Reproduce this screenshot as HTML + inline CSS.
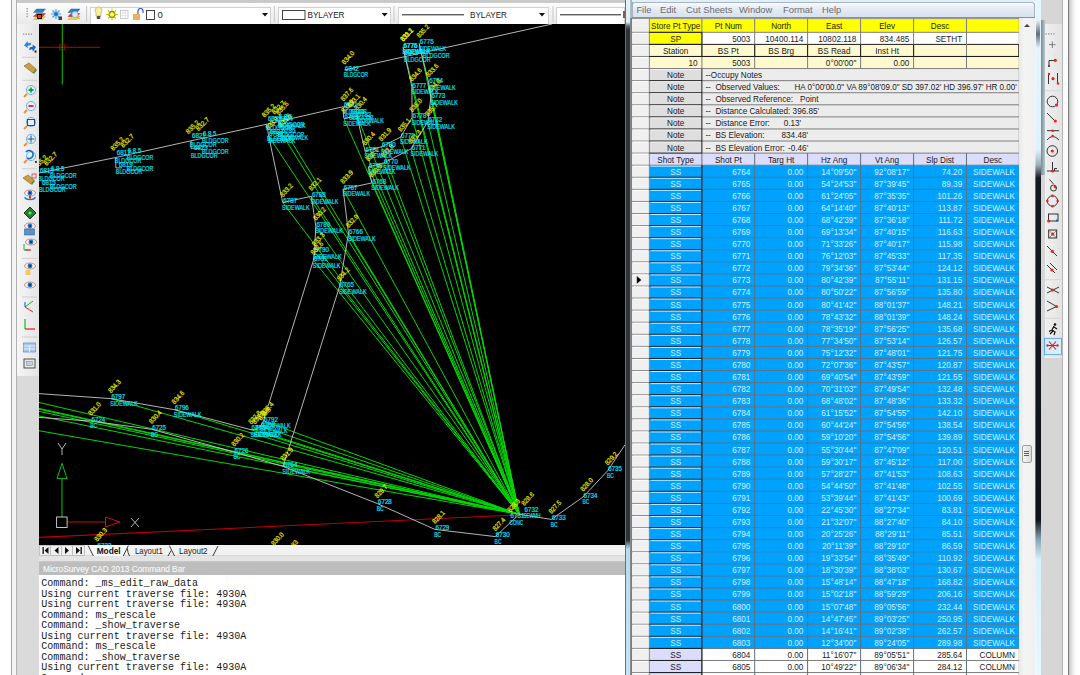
<!DOCTYPE html><html><head><meta charset="utf-8"><style>
*{margin:0;padding:0;box-sizing:border-box}
html,body{width:1080px;height:675px;overflow:hidden;background:#fff;position:relative;font-family:"Liberation Sans",sans-serif}
.ab{position:absolute}
.c{position:absolute;overflow:hidden;white-space:nowrap;font-size:8.6px;line-height:12px;color:#1a1a1a}
.r{text-align:right;padding-right:3px}
.m{text-align:center}
.l{text-align:left;padding-left:3px}
.cmd{font-family:"Liberation Mono",monospace;font-size:10.05px;line-height:10.52px;color:#1a1a1a;white-space:pre}
</style></head><body>
<div class="ab" style="left:11px;top:0px;width:1px;height:675px;background:#a4a4a4"></div>
<div class="ab" style="left:12px;top:0px;width:5px;height:675px;background:#f4f4f4"></div>
<div class="ab" style="left:16px;top:0px;width:1px;height:675px;background:#b0b0b0"></div>
<div class="ab" style="left:17px;top:0px;width:608px;height:3px;background:#c9c9c9"></div>
<div class="ab" style="left:17px;top:3px;width:608px;height:21px;background:linear-gradient(#fdfdfd,#e9e9e9)"></div>
<div class="ab" style="left:17px;top:24px;width:22px;height:521px;background:#dadada"></div>
<div class="ab" style="left:17px;top:545px;width:22px;height:130px;background:#dadada"></div>
<div class="ab" style="left:39px;top:575px;width:1px;height:100px;background:#a8a8a8"></div>
<div class="ab" style="left:90px;top:7px;width:181px;height:17px;background:#fff;border:1px solid #d0d0d0;border-bottom:none"></div>
<div class="ab" style="left:278px;top:7px;width:113px;height:17px;background:#fff;border:1px solid #d0d0d0;border-bottom:none"></div>
<div class="ab" style="left:398px;top:7px;width:151px;height:17px;background:#fff;border:1px solid #d0d0d0;border-bottom:none"></div>
<div class="ab" style="left:556px;top:7px;width:69px;height:17px;background:#fff;border:1px solid #d0d0d0;border-bottom:none"></div>
<svg class="ab" style="left:39px;top:24px" width="586" height="521" viewBox="39 24 586 521">
<rect x="39" y="24" width="586" height="521" fill="#000"/>
<line x1="519.3" y1="514.3" x2="283.1" y2="466.4" stroke="#00d800" stroke-width="1"/>
<line x1="519.3" y1="514.3" x2="339.5" y2="286.5" stroke="#00d800" stroke-width="1"/>
<line x1="519.3" y1="514.3" x2="348.5" y2="233.3" stroke="#00d800" stroke-width="1"/>
<line x1="519.3" y1="514.3" x2="343.1" y2="189.2" stroke="#00d800" stroke-width="1"/>
<line x1="519.3" y1="514.3" x2="371.8" y2="182.9" stroke="#00d800" stroke-width="1"/>
<line x1="519.3" y1="514.3" x2="368.4" y2="166.9" stroke="#00d800" stroke-width="1"/>
<line x1="519.3" y1="514.3" x2="383.5" y2="163.0" stroke="#00d800" stroke-width="1"/>
<line x1="519.3" y1="514.3" x2="411.1" y2="148.9" stroke="#00d800" stroke-width="1"/>
<line x1="519.3" y1="514.3" x2="427.8" y2="121.7" stroke="#00d800" stroke-width="1"/>
<line x1="519.3" y1="514.3" x2="430.8" y2="97.6" stroke="#00d800" stroke-width="1"/>
<line x1="519.3" y1="514.3" x2="428.6" y2="82.6" stroke="#00d800" stroke-width="1"/>
<line x1="519.3" y1="514.3" x2="419.2" y2="43.4" stroke="#00d800" stroke-width="1"/>
<line x1="519.3" y1="514.3" x2="403.0" y2="47.1" stroke="#00d800" stroke-width="1"/>
<line x1="519.3" y1="514.3" x2="411.9" y2="86.9" stroke="#00d800" stroke-width="1"/>
<line x1="519.3" y1="514.3" x2="412.1" y2="117.5" stroke="#00d800" stroke-width="1"/>
<line x1="519.3" y1="514.3" x2="400.5" y2="137.2" stroke="#00d800" stroke-width="1"/>
<line x1="519.3" y1="514.3" x2="381.4" y2="146.8" stroke="#00d800" stroke-width="1"/>
<line x1="519.3" y1="514.3" x2="365.0" y2="151.0" stroke="#00d800" stroke-width="1"/>
<line x1="519.3" y1="514.3" x2="356.9" y2="115.9" stroke="#00d800" stroke-width="1"/>
<line x1="519.3" y1="514.3" x2="343.9" y2="118.5" stroke="#00d800" stroke-width="1"/>
<line x1="519.3" y1="514.3" x2="278.6" y2="120.5" stroke="#00d800" stroke-width="1"/>
<line x1="519.3" y1="514.3" x2="281.1" y2="132.5" stroke="#00d800" stroke-width="1"/>
<line x1="519.3" y1="514.3" x2="268.3" y2="135.6" stroke="#00d800" stroke-width="1"/>
<line x1="519.3" y1="514.3" x2="282.7" y2="202.5" stroke="#00d800" stroke-width="1"/>
<line x1="519.3" y1="514.3" x2="311.3" y2="196.3" stroke="#00d800" stroke-width="1"/>
<line x1="519.3" y1="514.3" x2="315.8" y2="226.1" stroke="#00d800" stroke-width="1"/>
<line x1="519.3" y1="514.3" x2="314.5" y2="251.7" stroke="#00d800" stroke-width="1"/>
<line x1="519.3" y1="514.3" x2="313.4" y2="260.3" stroke="#00d800" stroke-width="1"/>
<line x1="519.3" y1="514.3" x2="263.5" y2="420.9" stroke="#00d800" stroke-width="1"/>
<line x1="519.3" y1="514.3" x2="260.7" y2="426.1" stroke="#00d800" stroke-width="1"/>
<line x1="519.3" y1="514.3" x2="254.7" y2="429.7" stroke="#00d800" stroke-width="1"/>
<line x1="519.3" y1="514.3" x2="251.0" y2="429.7" stroke="#00d800" stroke-width="1"/>
<line x1="519.3" y1="514.3" x2="174.4" y2="409.7" stroke="#00d800" stroke-width="1"/>
<line x1="519.3" y1="514.3" x2="110.8" y2="398.6" stroke="#00d800" stroke-width="1"/>
<line x1="519.3" y1="514.3" x2="-15.0" y2="389.9" stroke="#00d800" stroke-width="1"/>
<line x1="519.3" y1="514.3" x2="-135.1" y2="371.1" stroke="#00d800" stroke-width="1"/>
<line x1="519.3" y1="514.3" x2="-218.3" y2="351.7" stroke="#00d800" stroke-width="1"/>
<line x1="519.3" y1="514.3" x2="-278.1" y2="343.4" stroke="#00d800" stroke-width="1"/>
<line x1="519.3" y1="514.3" x2="-316.6" y2="343.1" stroke="#00d800" stroke-width="1"/>
<line x1="519.3" y1="514.3" x2="-409.1" y2="352.8" stroke="#00d800" stroke-width="1"/>
<line x1="519.3" y1="514.8" x2="39" y2="537.4" stroke="#c00000" stroke-width="1.1"/>
<polyline points="39.0,173.0 115.8,157.5 191.0,140.8 266.9,124.2 343.3,106.7 343.5,117.8" fill="none" stroke="#c8c8c8" stroke-width="0.9"/>
<polyline points="115.8,157.5 115.8,167.9 122.0,167.9" fill="none" stroke="#c8c8c8" stroke-width="0.9"/>
<polyline points="191.0,140.8 191.0,148.3 200.0,148.3" fill="none" stroke="#c8c8c8" stroke-width="0.9"/>
<polyline points="266.9,124.2 268.3,134.2" fill="none" stroke="#c8c8c8" stroke-width="0.9"/>
<polyline points="344.4,70.0 480.0,40.0 552.0,24.0" fill="none" stroke="#c8c8c8" stroke-width="0.9"/>
<polyline points="283.1,466.4 339.5,286.5 348.5,233.3 343.1,189.2 371.8,182.9 368.4,166.9 383.5,163.0 411.1,148.9 427.8,121.7 430.8,97.6 428.6,82.6 419.2,43.4" fill="none" stroke="#c8c8c8" stroke-width="0.9"/>
<polyline points="403.0,47.1 411.9,86.9 412.1,117.5 400.5,137.2 381.4,146.8 365.0,151.0 356.9,115.9 343.9,118.5" fill="none" stroke="#c8c8c8" stroke-width="0.9"/>
<polyline points="268.3,134.2 282.7,202.5 311.3,196.3 315.8,226.1 314.5,251.7 313.4,260.3 263.5,420.9 260.7,426.1 254.7,429.7 251.0,429.7 174.4,409.7 110.8,398.6 -15.0,389.9" fill="none" stroke="#c8c8c8" stroke-width="0.9"/>
<polyline points="39.0,417.4 90.9,421.1 151.6,429.3 234.0,452.0 283.1,466.4 377.4,503.6 434.9,529.4 495.2,536.6 519.3,514.3 551.3,519.4 583.0,497.0 607.6,470.8 625.0,444.7" fill="none" stroke="#c8c8c8" stroke-width="0.9"/>
<line x1="39" y1="47.3" x2="100" y2="47.3" stroke="#c00000" stroke-width="1"/>
<line x1="62.3" y1="24" x2="62.3" y2="84.5" stroke="#10c010" stroke-width="1"/>
<rect x="59.8" y="44.8" width="5" height="5" fill="none" stroke="#c00000" stroke-width="0.9"/>
<line x1="62" y1="517" x2="62" y2="478.6" stroke="#10c010" stroke-width="1"/>
<polygon points="57,478.6 62,463.3 67,478.6" fill="none" stroke="#10c010" stroke-width="1"/>
<line x1="67" y1="522" x2="105.5" y2="522" stroke="#c01010" stroke-width="1"/>
<polygon points="105.5,517 120,522 105.5,527" fill="none" stroke="#d01010" stroke-width="1"/>
<rect x="56.6" y="517" width="10.5" height="10.5" fill="none" stroke="#d8d8d8" stroke-width="0.9"/>
<path d="M58,443 L62,449 L66,443 M62,449 L62,455" stroke="#c8c8c8" stroke-width="0.9" fill="none"/>
<path d="M131,518 L139,527 M139,518 L131,527" stroke="#c8c8c8" stroke-width="0.9" fill="none"/>
<text x="283.7" y="467.0" fill="#00e8ff" stroke="#00e8ff" stroke-width="0.18" font-size="6.8" textLength="13.8" lengthAdjust="spacingAndGlyphs">6764</text>
<text x="282.5" y="473.6" fill="#00e8ff" stroke="#00e8ff" stroke-width="0.18" font-size="6.8" textLength="27.6" lengthAdjust="spacingAndGlyphs">SIDEWALK</text>
<text x="0" y="0" transform="translate(283.3,461.1) rotate(-47)" fill="#f0f000" stroke="#f0f000" stroke-width="0.18" font-size="6.8" textLength="15.1" lengthAdjust="spacingAndGlyphs">831.9</text>
<text x="340.1" y="287.1" fill="#00e8ff" stroke="#00e8ff" stroke-width="0.18" font-size="6.8" textLength="13.8" lengthAdjust="spacingAndGlyphs">6765</text>
<text x="338.9" y="293.7" fill="#00e8ff" stroke="#00e8ff" stroke-width="0.18" font-size="6.8" textLength="27.6" lengthAdjust="spacingAndGlyphs">SIDEWALK</text>
<text x="0" y="0" transform="translate(339.7,281.2) rotate(-47)" fill="#f0f000" stroke="#f0f000" stroke-width="0.18" font-size="6.8" textLength="15.1" lengthAdjust="spacingAndGlyphs">834.2</text>
<text x="349.1" y="233.9" fill="#00e8ff" stroke="#00e8ff" stroke-width="0.18" font-size="6.8" textLength="13.8" lengthAdjust="spacingAndGlyphs">6766</text>
<text x="347.9" y="240.5" fill="#00e8ff" stroke="#00e8ff" stroke-width="0.18" font-size="6.8" textLength="27.6" lengthAdjust="spacingAndGlyphs">SIDEWALK</text>
<text x="0" y="0" transform="translate(348.7,228.0) rotate(-47)" fill="#f0f000" stroke="#f0f000" stroke-width="0.18" font-size="6.8" textLength="15.1" lengthAdjust="spacingAndGlyphs">832.9</text>
<text x="343.7" y="189.8" fill="#00e8ff" stroke="#00e8ff" stroke-width="0.18" font-size="6.8" textLength="13.8" lengthAdjust="spacingAndGlyphs">6767</text>
<text x="342.5" y="196.4" fill="#00e8ff" stroke="#00e8ff" stroke-width="0.18" font-size="6.8" textLength="27.6" lengthAdjust="spacingAndGlyphs">SIDEWALK</text>
<text x="0" y="0" transform="translate(343.3,183.9) rotate(-47)" fill="#f0f000" stroke="#f0f000" stroke-width="0.18" font-size="6.8" textLength="15.1" lengthAdjust="spacingAndGlyphs">833.9</text>
<text x="372.4" y="183.5" fill="#00e8ff" stroke="#00e8ff" stroke-width="0.18" font-size="6.8" textLength="13.8" lengthAdjust="spacingAndGlyphs">6768</text>
<text x="371.2" y="190.1" fill="#00e8ff" stroke="#00e8ff" stroke-width="0.18" font-size="6.8" textLength="27.6" lengthAdjust="spacingAndGlyphs">SIDEWALK</text>
<text x="0" y="0" transform="translate(372.0,177.6) rotate(-47)" fill="#f0f000" stroke="#f0f000" stroke-width="0.18" font-size="6.8" textLength="15.1" lengthAdjust="spacingAndGlyphs">830.9</text>
<text x="369.0" y="167.5" fill="#00e8ff" stroke="#00e8ff" stroke-width="0.18" font-size="6.8" textLength="13.8" lengthAdjust="spacingAndGlyphs">6769</text>
<text x="367.8" y="174.1" fill="#00e8ff" stroke="#00e8ff" stroke-width="0.18" font-size="6.8" textLength="27.6" lengthAdjust="spacingAndGlyphs">SIDEWALK</text>
<text x="0" y="0" transform="translate(368.6,161.6) rotate(-47)" fill="#f0f000" stroke="#f0f000" stroke-width="0.18" font-size="6.8" textLength="15.1" lengthAdjust="spacingAndGlyphs">830.7</text>
<text x="384.1" y="163.6" fill="#00e8ff" stroke="#00e8ff" stroke-width="0.18" font-size="6.8" textLength="13.8" lengthAdjust="spacingAndGlyphs">6770</text>
<text x="382.9" y="170.2" fill="#00e8ff" stroke="#00e8ff" stroke-width="0.18" font-size="6.8" textLength="27.6" lengthAdjust="spacingAndGlyphs">SIDEWALK</text>
<text x="0" y="0" transform="translate(383.7,157.7) rotate(-47)" fill="#f0f000" stroke="#f0f000" stroke-width="0.18" font-size="6.8" textLength="15.1" lengthAdjust="spacingAndGlyphs">832.8</text>
<text x="411.7" y="149.5" fill="#00e8ff" stroke="#00e8ff" stroke-width="0.18" font-size="6.8" textLength="13.8" lengthAdjust="spacingAndGlyphs">6771</text>
<text x="410.5" y="156.1" fill="#00e8ff" stroke="#00e8ff" stroke-width="0.18" font-size="6.8" textLength="27.6" lengthAdjust="spacingAndGlyphs">SIDEWALK</text>
<text x="0" y="0" transform="translate(411.3,143.6) rotate(-47)" fill="#f0f000" stroke="#f0f000" stroke-width="0.18" font-size="6.8" textLength="15.1" lengthAdjust="spacingAndGlyphs">831.3</text>
<text x="428.4" y="122.3" fill="#00e8ff" stroke="#00e8ff" stroke-width="0.18" font-size="6.8" textLength="13.8" lengthAdjust="spacingAndGlyphs">6772</text>
<text x="427.2" y="128.9" fill="#00e8ff" stroke="#00e8ff" stroke-width="0.18" font-size="6.8" textLength="27.6" lengthAdjust="spacingAndGlyphs">SIDEWALK</text>
<text x="0" y="0" transform="translate(428.0,116.4) rotate(-47)" fill="#f0f000" stroke="#f0f000" stroke-width="0.18" font-size="6.8" textLength="15.1" lengthAdjust="spacingAndGlyphs">835.7</text>
<text x="431.4" y="98.2" fill="#00e8ff" stroke="#00e8ff" stroke-width="0.18" font-size="6.8" textLength="13.8" lengthAdjust="spacingAndGlyphs">6773</text>
<text x="430.2" y="104.8" fill="#00e8ff" stroke="#00e8ff" stroke-width="0.18" font-size="6.8" textLength="27.6" lengthAdjust="spacingAndGlyphs">SIDEWALK</text>
<text x="0" y="0" transform="translate(431.0,92.3) rotate(-47)" fill="#f0f000" stroke="#f0f000" stroke-width="0.18" font-size="6.8" textLength="15.1" lengthAdjust="spacingAndGlyphs">834.8</text>
<text x="429.2" y="83.2" fill="#00e8ff" stroke="#00e8ff" stroke-width="0.18" font-size="6.8" textLength="13.8" lengthAdjust="spacingAndGlyphs">6774</text>
<text x="428.0" y="89.8" fill="#00e8ff" stroke="#00e8ff" stroke-width="0.18" font-size="6.8" textLength="27.6" lengthAdjust="spacingAndGlyphs">SIDEWALK</text>
<text x="0" y="0" transform="translate(428.8,77.3) rotate(-47)" fill="#f0f000" stroke="#f0f000" stroke-width="0.18" font-size="6.8" textLength="15.1" lengthAdjust="spacingAndGlyphs">833.6</text>
<text x="419.8" y="44.0" fill="#00e8ff" stroke="#00e8ff" stroke-width="0.18" font-size="6.8" textLength="13.8" lengthAdjust="spacingAndGlyphs">6775</text>
<text x="418.6" y="50.6" fill="#00e8ff" stroke="#00e8ff" stroke-width="0.18" font-size="6.8" textLength="27.6" lengthAdjust="spacingAndGlyphs">SIDEWALK</text>
<text x="0" y="0" transform="translate(419.4,38.1) rotate(-47)" fill="#f0f000" stroke="#f0f000" stroke-width="0.18" font-size="6.8" textLength="15.1" lengthAdjust="spacingAndGlyphs">835.2</text>
<text x="403.6" y="47.7" fill="#00e8ff" stroke="#00e8ff" stroke-width="0.18" font-size="6.8" textLength="13.8" lengthAdjust="spacingAndGlyphs">6776</text>
<text x="402.4" y="54.3" fill="#00e8ff" stroke="#00e8ff" stroke-width="0.18" font-size="6.8" textLength="27.6" lengthAdjust="spacingAndGlyphs">SIDEWALK</text>
<text x="0" y="0" transform="translate(403.2,41.8) rotate(-47)" fill="#f0f000" stroke="#f0f000" stroke-width="0.18" font-size="6.8" textLength="15.1" lengthAdjust="spacingAndGlyphs">831.2</text>
<text x="412.5" y="87.5" fill="#00e8ff" stroke="#00e8ff" stroke-width="0.18" font-size="6.8" textLength="13.8" lengthAdjust="spacingAndGlyphs">6777</text>
<text x="411.3" y="94.1" fill="#00e8ff" stroke="#00e8ff" stroke-width="0.18" font-size="6.8" textLength="27.6" lengthAdjust="spacingAndGlyphs">SIDEWALK</text>
<text x="0" y="0" transform="translate(412.1,81.6) rotate(-47)" fill="#f0f000" stroke="#f0f000" stroke-width="0.18" font-size="6.8" textLength="15.1" lengthAdjust="spacingAndGlyphs">834.6</text>
<text x="412.7" y="118.1" fill="#00e8ff" stroke="#00e8ff" stroke-width="0.18" font-size="6.8" textLength="13.8" lengthAdjust="spacingAndGlyphs">6778</text>
<text x="411.5" y="124.7" fill="#00e8ff" stroke="#00e8ff" stroke-width="0.18" font-size="6.8" textLength="27.6" lengthAdjust="spacingAndGlyphs">SIDEWALK</text>
<text x="0" y="0" transform="translate(412.3,112.2) rotate(-47)" fill="#f0f000" stroke="#f0f000" stroke-width="0.18" font-size="6.8" textLength="15.1" lengthAdjust="spacingAndGlyphs">835.0</text>
<text x="401.1" y="137.8" fill="#00e8ff" stroke="#00e8ff" stroke-width="0.18" font-size="6.8" textLength="13.8" lengthAdjust="spacingAndGlyphs">6779</text>
<text x="399.9" y="144.4" fill="#00e8ff" stroke="#00e8ff" stroke-width="0.18" font-size="6.8" textLength="27.6" lengthAdjust="spacingAndGlyphs">SIDEWALK</text>
<text x="0" y="0" transform="translate(400.7,131.9) rotate(-47)" fill="#f0f000" stroke="#f0f000" stroke-width="0.18" font-size="6.8" textLength="15.1" lengthAdjust="spacingAndGlyphs">835.1</text>
<text x="382.0" y="147.4" fill="#00e8ff" stroke="#00e8ff" stroke-width="0.18" font-size="6.8" textLength="13.8" lengthAdjust="spacingAndGlyphs">6780</text>
<text x="380.8" y="154.0" fill="#00e8ff" stroke="#00e8ff" stroke-width="0.18" font-size="6.8" textLength="27.6" lengthAdjust="spacingAndGlyphs">SIDEWALK</text>
<text x="0" y="0" transform="translate(381.6,141.5) rotate(-47)" fill="#f0f000" stroke="#f0f000" stroke-width="0.18" font-size="6.8" textLength="15.1" lengthAdjust="spacingAndGlyphs">831.9</text>
<text x="365.6" y="151.6" fill="#00e8ff" stroke="#00e8ff" stroke-width="0.18" font-size="6.8" textLength="13.8" lengthAdjust="spacingAndGlyphs">6781</text>
<text x="364.4" y="158.2" fill="#00e8ff" stroke="#00e8ff" stroke-width="0.18" font-size="6.8" textLength="27.6" lengthAdjust="spacingAndGlyphs">SIDEWALK</text>
<text x="0" y="0" transform="translate(365.2,145.7) rotate(-47)" fill="#f0f000" stroke="#f0f000" stroke-width="0.18" font-size="6.8" textLength="15.1" lengthAdjust="spacingAndGlyphs">830.4</text>
<text x="357.5" y="116.5" fill="#00e8ff" stroke="#00e8ff" stroke-width="0.18" font-size="6.8" textLength="13.8" lengthAdjust="spacingAndGlyphs">6782</text>
<text x="356.3" y="123.1" fill="#00e8ff" stroke="#00e8ff" stroke-width="0.18" font-size="6.8" textLength="27.6" lengthAdjust="spacingAndGlyphs">SIDEWALK</text>
<text x="0" y="0" transform="translate(357.1,110.6) rotate(-47)" fill="#f0f000" stroke="#f0f000" stroke-width="0.18" font-size="6.8" textLength="15.1" lengthAdjust="spacingAndGlyphs">830.4</text>
<text x="344.5" y="119.1" fill="#00e8ff" stroke="#00e8ff" stroke-width="0.18" font-size="6.8" textLength="13.8" lengthAdjust="spacingAndGlyphs">6783</text>
<text x="343.3" y="125.7" fill="#00e8ff" stroke="#00e8ff" stroke-width="0.18" font-size="6.8" textLength="27.6" lengthAdjust="spacingAndGlyphs">SIDEWALK</text>
<text x="0" y="0" transform="translate(344.1,113.2) rotate(-47)" fill="#f0f000" stroke="#f0f000" stroke-width="0.18" font-size="6.8" textLength="15.1" lengthAdjust="spacingAndGlyphs">833.9</text>
<text x="279.2" y="121.1" fill="#00e8ff" stroke="#00e8ff" stroke-width="0.18" font-size="6.8" textLength="13.8" lengthAdjust="spacingAndGlyphs">6784</text>
<text x="278.0" y="127.7" fill="#00e8ff" stroke="#00e8ff" stroke-width="0.18" font-size="6.8" textLength="27.6" lengthAdjust="spacingAndGlyphs">SIDEWALK</text>
<text x="0" y="0" transform="translate(278.8,115.2) rotate(-47)" fill="#f0f000" stroke="#f0f000" stroke-width="0.18" font-size="6.8" textLength="15.1" lengthAdjust="spacingAndGlyphs">835.6</text>
<text x="281.7" y="133.1" fill="#00e8ff" stroke="#00e8ff" stroke-width="0.18" font-size="6.8" textLength="13.8" lengthAdjust="spacingAndGlyphs">6785</text>
<text x="280.5" y="139.7" fill="#00e8ff" stroke="#00e8ff" stroke-width="0.18" font-size="6.8" textLength="27.6" lengthAdjust="spacingAndGlyphs">SIDEWALK</text>
<text x="0" y="0" transform="translate(281.3,127.2) rotate(-47)" fill="#f0f000" stroke="#f0f000" stroke-width="0.18" font-size="6.8" textLength="15.1" lengthAdjust="spacingAndGlyphs">835.6</text>
<text x="268.9" y="136.2" fill="#00e8ff" stroke="#00e8ff" stroke-width="0.18" font-size="6.8" textLength="13.8" lengthAdjust="spacingAndGlyphs">6786</text>
<text x="267.7" y="142.8" fill="#00e8ff" stroke="#00e8ff" stroke-width="0.18" font-size="6.8" textLength="27.6" lengthAdjust="spacingAndGlyphs">SIDEWALK</text>
<text x="0" y="0" transform="translate(268.5,130.3) rotate(-47)" fill="#f0f000" stroke="#f0f000" stroke-width="0.18" font-size="6.8" textLength="15.1" lengthAdjust="spacingAndGlyphs">833.9</text>
<text x="283.3" y="203.1" fill="#00e8ff" stroke="#00e8ff" stroke-width="0.18" font-size="6.8" textLength="13.8" lengthAdjust="spacingAndGlyphs">6787</text>
<text x="282.1" y="209.7" fill="#00e8ff" stroke="#00e8ff" stroke-width="0.18" font-size="6.8" textLength="27.6" lengthAdjust="spacingAndGlyphs">SIDEWALK</text>
<text x="0" y="0" transform="translate(282.9,197.2) rotate(-47)" fill="#f0f000" stroke="#f0f000" stroke-width="0.18" font-size="6.8" textLength="15.1" lengthAdjust="spacingAndGlyphs">833.2</text>
<text x="311.9" y="196.9" fill="#00e8ff" stroke="#00e8ff" stroke-width="0.18" font-size="6.8" textLength="13.8" lengthAdjust="spacingAndGlyphs">6788</text>
<text x="310.7" y="203.5" fill="#00e8ff" stroke="#00e8ff" stroke-width="0.18" font-size="6.8" textLength="27.6" lengthAdjust="spacingAndGlyphs">SIDEWALK</text>
<text x="0" y="0" transform="translate(311.5,191.0) rotate(-47)" fill="#f0f000" stroke="#f0f000" stroke-width="0.18" font-size="6.8" textLength="15.1" lengthAdjust="spacingAndGlyphs">832.1</text>
<text x="316.4" y="226.7" fill="#00e8ff" stroke="#00e8ff" stroke-width="0.18" font-size="6.8" textLength="13.8" lengthAdjust="spacingAndGlyphs">6789</text>
<text x="315.2" y="233.3" fill="#00e8ff" stroke="#00e8ff" stroke-width="0.18" font-size="6.8" textLength="27.6" lengthAdjust="spacingAndGlyphs">SIDEWALK</text>
<text x="0" y="0" transform="translate(316.0,220.8) rotate(-47)" fill="#f0f000" stroke="#f0f000" stroke-width="0.18" font-size="6.8" textLength="15.1" lengthAdjust="spacingAndGlyphs">830.2</text>
<text x="315.1" y="252.3" fill="#00e8ff" stroke="#00e8ff" stroke-width="0.18" font-size="6.8" textLength="13.8" lengthAdjust="spacingAndGlyphs">6790</text>
<text x="313.9" y="258.9" fill="#00e8ff" stroke="#00e8ff" stroke-width="0.18" font-size="6.8" textLength="27.6" lengthAdjust="spacingAndGlyphs">SIDEWALK</text>
<text x="0" y="0" transform="translate(314.7,246.4) rotate(-47)" fill="#f0f000" stroke="#f0f000" stroke-width="0.18" font-size="6.8" textLength="15.1" lengthAdjust="spacingAndGlyphs">833.3</text>
<text x="314.0" y="260.9" fill="#00e8ff" stroke="#00e8ff" stroke-width="0.18" font-size="6.8" textLength="13.8" lengthAdjust="spacingAndGlyphs">6791</text>
<text x="312.8" y="267.5" fill="#00e8ff" stroke="#00e8ff" stroke-width="0.18" font-size="6.8" textLength="27.6" lengthAdjust="spacingAndGlyphs">SIDEWALK</text>
<text x="0" y="0" transform="translate(313.6,255.0) rotate(-47)" fill="#f0f000" stroke="#f0f000" stroke-width="0.18" font-size="6.8" textLength="15.1" lengthAdjust="spacingAndGlyphs">832.6</text>
<text x="264.1" y="421.5" fill="#00e8ff" stroke="#00e8ff" stroke-width="0.18" font-size="6.8" textLength="13.8" lengthAdjust="spacingAndGlyphs">6792</text>
<text x="262.9" y="428.1" fill="#00e8ff" stroke="#00e8ff" stroke-width="0.18" font-size="6.8" textLength="27.6" lengthAdjust="spacingAndGlyphs">SIDEWALK</text>
<text x="0" y="0" transform="translate(263.7,415.6) rotate(-47)" fill="#f0f000" stroke="#f0f000" stroke-width="0.18" font-size="6.8" textLength="15.1" lengthAdjust="spacingAndGlyphs">835.4</text>
<text x="261.3" y="426.7" fill="#00e8ff" stroke="#00e8ff" stroke-width="0.18" font-size="6.8" textLength="13.8" lengthAdjust="spacingAndGlyphs">6793</text>
<text x="260.1" y="433.3" fill="#00e8ff" stroke="#00e8ff" stroke-width="0.18" font-size="6.8" textLength="27.6" lengthAdjust="spacingAndGlyphs">SIDEWALK</text>
<text x="0" y="0" transform="translate(260.9,420.8) rotate(-47)" fill="#f0f000" stroke="#f0f000" stroke-width="0.18" font-size="6.8" textLength="15.1" lengthAdjust="spacingAndGlyphs">833.8</text>
<text x="255.3" y="430.3" fill="#00e8ff" stroke="#00e8ff" stroke-width="0.18" font-size="6.8" textLength="13.8" lengthAdjust="spacingAndGlyphs">6794</text>
<text x="254.1" y="436.9" fill="#00e8ff" stroke="#00e8ff" stroke-width="0.18" font-size="6.8" textLength="27.6" lengthAdjust="spacingAndGlyphs">SIDEWALK</text>
<text x="0" y="0" transform="translate(254.9,424.4) rotate(-47)" fill="#f0f000" stroke="#f0f000" stroke-width="0.18" font-size="6.8" textLength="15.1" lengthAdjust="spacingAndGlyphs">833.9</text>
<text x="251.6" y="430.3" fill="#00e8ff" stroke="#00e8ff" stroke-width="0.18" font-size="6.8" textLength="13.8" lengthAdjust="spacingAndGlyphs">6795</text>
<text x="250.4" y="436.9" fill="#00e8ff" stroke="#00e8ff" stroke-width="0.18" font-size="6.8" textLength="27.6" lengthAdjust="spacingAndGlyphs">SIDEWALK</text>
<text x="0" y="0" transform="translate(251.2,424.4) rotate(-47)" fill="#f0f000" stroke="#f0f000" stroke-width="0.18" font-size="6.8" textLength="15.1" lengthAdjust="spacingAndGlyphs">832.8</text>
<text x="175.0" y="410.3" fill="#00e8ff" stroke="#00e8ff" stroke-width="0.18" font-size="6.8" textLength="13.8" lengthAdjust="spacingAndGlyphs">6796</text>
<text x="173.8" y="416.9" fill="#00e8ff" stroke="#00e8ff" stroke-width="0.18" font-size="6.8" textLength="27.6" lengthAdjust="spacingAndGlyphs">SIDEWALK</text>
<text x="0" y="0" transform="translate(174.6,404.4) rotate(-47)" fill="#f0f000" stroke="#f0f000" stroke-width="0.18" font-size="6.8" textLength="15.1" lengthAdjust="spacingAndGlyphs">834.6</text>
<text x="111.4" y="399.2" fill="#00e8ff" stroke="#00e8ff" stroke-width="0.18" font-size="6.8" textLength="13.8" lengthAdjust="spacingAndGlyphs">6797</text>
<text x="110.2" y="405.8" fill="#00e8ff" stroke="#00e8ff" stroke-width="0.18" font-size="6.8" textLength="27.6" lengthAdjust="spacingAndGlyphs">SIDEWALK</text>
<text x="0" y="0" transform="translate(111.0,393.3) rotate(-47)" fill="#f0f000" stroke="#f0f000" stroke-width="0.18" font-size="6.8" textLength="15.1" lengthAdjust="spacingAndGlyphs">834.3</text>
<text x="91.5" y="421.7" fill="#00e8ff" stroke="#00e8ff" stroke-width="0.18" font-size="6.8" textLength="13.8" lengthAdjust="spacingAndGlyphs">6724</text>
<text x="90.3" y="428.3" fill="#00e8ff" stroke="#00e8ff" stroke-width="0.18" font-size="6.8" textLength="6.9" lengthAdjust="spacingAndGlyphs">BC</text>
<text x="0" y="0" transform="translate(91.1,415.8) rotate(-47)" fill="#f0f000" stroke="#f0f000" stroke-width="0.18" font-size="6.8" textLength="15.1" lengthAdjust="spacingAndGlyphs">831.0</text>
<text x="152.2" y="429.9" fill="#00e8ff" stroke="#00e8ff" stroke-width="0.18" font-size="6.8" textLength="13.8" lengthAdjust="spacingAndGlyphs">6725</text>
<text x="151.0" y="436.5" fill="#00e8ff" stroke="#00e8ff" stroke-width="0.18" font-size="6.8" textLength="6.9" lengthAdjust="spacingAndGlyphs">BC</text>
<text x="0" y="0" transform="translate(151.8,424.0) rotate(-47)" fill="#f0f000" stroke="#f0f000" stroke-width="0.18" font-size="6.8" textLength="15.1" lengthAdjust="spacingAndGlyphs">830.4</text>
<text x="234.6" y="452.6" fill="#00e8ff" stroke="#00e8ff" stroke-width="0.18" font-size="6.8" textLength="13.8" lengthAdjust="spacingAndGlyphs">6726</text>
<text x="233.4" y="459.2" fill="#00e8ff" stroke="#00e8ff" stroke-width="0.18" font-size="6.8" textLength="6.9" lengthAdjust="spacingAndGlyphs">BC</text>
<text x="0" y="0" transform="translate(234.2,446.7) rotate(-47)" fill="#f0f000" stroke="#f0f000" stroke-width="0.18" font-size="6.8" textLength="15.1" lengthAdjust="spacingAndGlyphs">830.2</text>
<text x="378.0" y="504.2" fill="#00e8ff" stroke="#00e8ff" stroke-width="0.18" font-size="6.8" textLength="13.8" lengthAdjust="spacingAndGlyphs">6728</text>
<text x="376.8" y="510.8" fill="#00e8ff" stroke="#00e8ff" stroke-width="0.18" font-size="6.8" textLength="6.9" lengthAdjust="spacingAndGlyphs">BC</text>
<text x="0" y="0" transform="translate(377.6,498.3) rotate(-47)" fill="#f0f000" stroke="#f0f000" stroke-width="0.18" font-size="6.8" textLength="15.1" lengthAdjust="spacingAndGlyphs">829.7</text>
<text x="435.5" y="530.0" fill="#00e8ff" stroke="#00e8ff" stroke-width="0.18" font-size="6.8" textLength="13.8" lengthAdjust="spacingAndGlyphs">6729</text>
<text x="434.3" y="536.6" fill="#00e8ff" stroke="#00e8ff" stroke-width="0.18" font-size="6.8" textLength="6.9" lengthAdjust="spacingAndGlyphs">BC</text>
<text x="0" y="0" transform="translate(435.1,524.1) rotate(-47)" fill="#f0f000" stroke="#f0f000" stroke-width="0.18" font-size="6.8" textLength="15.1" lengthAdjust="spacingAndGlyphs">828.1</text>
<text x="495.8" y="537.2" fill="#00e8ff" stroke="#00e8ff" stroke-width="0.18" font-size="6.8" textLength="13.8" lengthAdjust="spacingAndGlyphs">6730</text>
<text x="494.6" y="543.8" fill="#00e8ff" stroke="#00e8ff" stroke-width="0.18" font-size="6.8" textLength="6.9" lengthAdjust="spacingAndGlyphs">BC</text>
<text x="0" y="0" transform="translate(495.4,531.3) rotate(-47)" fill="#f0f000" stroke="#f0f000" stroke-width="0.18" font-size="6.8" textLength="15.1" lengthAdjust="spacingAndGlyphs">827.4</text>
<text x="551.9" y="520.0" fill="#00e8ff" stroke="#00e8ff" stroke-width="0.18" font-size="6.8" textLength="13.8" lengthAdjust="spacingAndGlyphs">6733</text>
<text x="550.7" y="526.6" fill="#00e8ff" stroke="#00e8ff" stroke-width="0.18" font-size="6.8" textLength="6.9" lengthAdjust="spacingAndGlyphs">BC</text>
<text x="0" y="0" transform="translate(551.5,514.1) rotate(-47)" fill="#f0f000" stroke="#f0f000" stroke-width="0.18" font-size="6.8" textLength="15.1" lengthAdjust="spacingAndGlyphs">827.5</text>
<text x="583.6" y="497.6" fill="#00e8ff" stroke="#00e8ff" stroke-width="0.18" font-size="6.8" textLength="13.8" lengthAdjust="spacingAndGlyphs">6734</text>
<text x="582.4" y="504.2" fill="#00e8ff" stroke="#00e8ff" stroke-width="0.18" font-size="6.8" textLength="6.9" lengthAdjust="spacingAndGlyphs">BC</text>
<text x="0" y="0" transform="translate(583.2,491.7) rotate(-47)" fill="#f0f000" stroke="#f0f000" stroke-width="0.18" font-size="6.8" textLength="15.1" lengthAdjust="spacingAndGlyphs">828.0</text>
<text x="608.2" y="471.4" fill="#00e8ff" stroke="#00e8ff" stroke-width="0.18" font-size="6.8" textLength="13.8" lengthAdjust="spacingAndGlyphs">6735</text>
<text x="607.0" y="478.0" fill="#00e8ff" stroke="#00e8ff" stroke-width="0.18" font-size="6.8" textLength="6.9" lengthAdjust="spacingAndGlyphs">BC</text>
<text x="0" y="0" transform="translate(607.8,465.5) rotate(-47)" fill="#f0f000" stroke="#f0f000" stroke-width="0.18" font-size="6.8" textLength="15.1" lengthAdjust="spacingAndGlyphs">829.2</text>
<text x="97.6" y="547.6" fill="#00e8ff" stroke="#00e8ff" stroke-width="0.18" font-size="6.8" textLength="13.8" lengthAdjust="spacingAndGlyphs">6723</text>
<text x="96.4" y="554.2" fill="#00e8ff" stroke="#00e8ff" stroke-width="0.18" font-size="6.8" textLength="6.9" lengthAdjust="spacingAndGlyphs">BC</text>
<text x="0" y="0" transform="translate(97.2,541.7) rotate(-47)" fill="#f0f000" stroke="#f0f000" stroke-width="0.18" font-size="6.8" textLength="15.1" lengthAdjust="spacingAndGlyphs">830.3</text>
<text x="0" y="0" transform="translate(274.0,546.0) rotate(-47)" fill="#f0f000" stroke="#f0f000" stroke-width="0.18" font-size="6.8" textLength="15.1" lengthAdjust="spacingAndGlyphs">830.0</text>
<text x="0" y="0" transform="translate(294.0,547.5) rotate(-47)" fill="#f0f000" stroke="#f0f000" stroke-width="0.18" font-size="6.8" textLength="6.8" lengthAdjust="spacingAndGlyphs">83</text>
<text x="510.6" y="518.4" fill="#00e8ff" stroke="#00e8ff" stroke-width="0.18" font-size="6.8" textLength="13.8" lengthAdjust="spacingAndGlyphs">6731</text>
<text x="509.4" y="525.0" fill="#00e8ff" stroke="#00e8ff" stroke-width="0.18" font-size="6.8" textLength="13.8" lengthAdjust="spacingAndGlyphs">CONC</text>
<text x="0" y="0" transform="translate(510.2,512.5) rotate(-47)" fill="#f0f000" stroke="#f0f000" stroke-width="0.18" font-size="6.8" textLength="15.1" lengthAdjust="spacingAndGlyphs">828.3</text>
<text x="524.6" y="511.8" fill="#00e8ff" stroke="#00e8ff" stroke-width="0.18" font-size="6.8" textLength="13.8" lengthAdjust="spacingAndGlyphs">6732</text>
<text x="523.4" y="518.4" fill="#00e8ff" stroke="#00e8ff" stroke-width="0.18" font-size="6.8" textLength="17.2" lengthAdjust="spacingAndGlyphs">SEWMH</text>
<text x="0" y="0" transform="translate(524.2,505.9) rotate(-47)" fill="#f0f000" stroke="#f0f000" stroke-width="0.18" font-size="6.8" textLength="15.1" lengthAdjust="spacingAndGlyphs">828.6</text>
<text x="0" y="0" transform="translate(36.5,169.0) rotate(-45)" fill="#f0f000" stroke="#f0f000" stroke-width="0.18" font-size="6.8" textLength="16.0" lengthAdjust="spacingAndGlyphs">835.2</text>
<text x="0" y="0" transform="translate(46.5,166.0) rotate(-45)" fill="#f0f000" stroke="#f0f000" stroke-width="0.18" font-size="6.8" textLength="16.0" lengthAdjust="spacingAndGlyphs">832.7</text>
<text x="40.0" y="172.7" fill="#00e8ff" stroke="#00e8ff" stroke-width="0.18" font-size="6.8" textLength="13.8" lengthAdjust="spacingAndGlyphs">6813</text>
<text x="51.0" y="170.5" fill="#00e8ff" stroke="#00e8ff" stroke-width="0.18" font-size="6.8" textLength="13.3" lengthAdjust="spacingAndGlyphs">6.8.5</text>
<text x="50.0" y="178.0" fill="#00e8ff" stroke="#00e8ff" stroke-width="0.18" font-size="6.8" textLength="26.6" lengthAdjust="spacingAndGlyphs">BLDGCOR</text>
<text x="38.0" y="181.4" fill="#00e8ff" stroke="#00e8ff" stroke-width="0.18" font-size="6.8" textLength="26.6" lengthAdjust="spacingAndGlyphs">BLDGCOR</text>
<text x="42.0" y="185.0" fill="#00e8ff" stroke="#00e8ff" stroke-width="0.18" font-size="6.8" textLength="13.8" lengthAdjust="spacingAndGlyphs">6815</text>
<text x="50.0" y="188.5" fill="#00e8ff" stroke="#00e8ff" stroke-width="0.18" font-size="6.8" textLength="26.6" lengthAdjust="spacingAndGlyphs">BLDGCOR</text>
<text x="39.0" y="192.2" fill="#00e8ff" stroke="#00e8ff" stroke-width="0.18" font-size="6.8" textLength="26.6" lengthAdjust="spacingAndGlyphs">BLDGCOR</text>
<text x="0" y="0" transform="translate(113.3,151.0) rotate(-45)" fill="#f0f000" stroke="#f0f000" stroke-width="0.18" font-size="6.8" textLength="16.0" lengthAdjust="spacingAndGlyphs">835.2</text>
<text x="0" y="0" transform="translate(123.3,148.0) rotate(-45)" fill="#f0f000" stroke="#f0f000" stroke-width="0.18" font-size="6.8" textLength="16.0" lengthAdjust="spacingAndGlyphs">832.7</text>
<text x="116.8" y="154.7" fill="#00e8ff" stroke="#00e8ff" stroke-width="0.18" font-size="6.8" textLength="13.8" lengthAdjust="spacingAndGlyphs">6817</text>
<text x="127.8" y="152.5" fill="#00e8ff" stroke="#00e8ff" stroke-width="0.18" font-size="6.8" textLength="13.3" lengthAdjust="spacingAndGlyphs">6.8.5</text>
<text x="126.8" y="160.0" fill="#00e8ff" stroke="#00e8ff" stroke-width="0.18" font-size="6.8" textLength="26.6" lengthAdjust="spacingAndGlyphs">BLDGCOR</text>
<text x="114.8" y="163.4" fill="#00e8ff" stroke="#00e8ff" stroke-width="0.18" font-size="6.8" textLength="26.6" lengthAdjust="spacingAndGlyphs">BLDGCOR</text>
<text x="118.8" y="167.0" fill="#00e8ff" stroke="#00e8ff" stroke-width="0.18" font-size="6.8" textLength="13.8" lengthAdjust="spacingAndGlyphs">6819</text>
<text x="126.8" y="170.5" fill="#00e8ff" stroke="#00e8ff" stroke-width="0.18" font-size="6.8" textLength="26.6" lengthAdjust="spacingAndGlyphs">BLDGCOR</text>
<text x="115.8" y="174.2" fill="#00e8ff" stroke="#00e8ff" stroke-width="0.18" font-size="6.8" textLength="26.6" lengthAdjust="spacingAndGlyphs">BLDGCOR</text>
<text x="0" y="0" transform="translate(188.5,134.3) rotate(-45)" fill="#f0f000" stroke="#f0f000" stroke-width="0.18" font-size="6.8" textLength="16.0" lengthAdjust="spacingAndGlyphs">835.2</text>
<text x="0" y="0" transform="translate(198.5,131.3) rotate(-45)" fill="#f0f000" stroke="#f0f000" stroke-width="0.18" font-size="6.8" textLength="16.0" lengthAdjust="spacingAndGlyphs">832.7</text>
<text x="192.0" y="138.0" fill="#00e8ff" stroke="#00e8ff" stroke-width="0.18" font-size="6.8" textLength="13.8" lengthAdjust="spacingAndGlyphs">6821</text>
<text x="203.0" y="135.8" fill="#00e8ff" stroke="#00e8ff" stroke-width="0.18" font-size="6.8" textLength="13.3" lengthAdjust="spacingAndGlyphs">6.8.5</text>
<text x="202.0" y="143.3" fill="#00e8ff" stroke="#00e8ff" stroke-width="0.18" font-size="6.8" textLength="26.6" lengthAdjust="spacingAndGlyphs">BLDGCOR</text>
<text x="190.0" y="146.7" fill="#00e8ff" stroke="#00e8ff" stroke-width="0.18" font-size="6.8" textLength="26.6" lengthAdjust="spacingAndGlyphs">BLDGCOR</text>
<text x="194.0" y="150.3" fill="#00e8ff" stroke="#00e8ff" stroke-width="0.18" font-size="6.8" textLength="13.8" lengthAdjust="spacingAndGlyphs">6823</text>
<text x="202.0" y="153.8" fill="#00e8ff" stroke="#00e8ff" stroke-width="0.18" font-size="6.8" textLength="26.6" lengthAdjust="spacingAndGlyphs">BLDGCOR</text>
<text x="191.0" y="157.5" fill="#00e8ff" stroke="#00e8ff" stroke-width="0.18" font-size="6.8" textLength="26.6" lengthAdjust="spacingAndGlyphs">BLDGCOR</text>
<text x="0" y="0" transform="translate(264.4,117.7) rotate(-45)" fill="#f0f000" stroke="#f0f000" stroke-width="0.18" font-size="6.8" textLength="16.0" lengthAdjust="spacingAndGlyphs">835.2</text>
<text x="0" y="0" transform="translate(274.4,114.7) rotate(-45)" fill="#f0f000" stroke="#f0f000" stroke-width="0.18" font-size="6.8" textLength="16.0" lengthAdjust="spacingAndGlyphs">832.7</text>
<text x="267.9" y="121.4" fill="#00e8ff" stroke="#00e8ff" stroke-width="0.18" font-size="6.8" textLength="13.8" lengthAdjust="spacingAndGlyphs">6825</text>
<text x="278.9" y="119.2" fill="#00e8ff" stroke="#00e8ff" stroke-width="0.18" font-size="6.8" textLength="13.3" lengthAdjust="spacingAndGlyphs">6.8.5</text>
<text x="277.9" y="126.7" fill="#00e8ff" stroke="#00e8ff" stroke-width="0.18" font-size="6.8" textLength="26.6" lengthAdjust="spacingAndGlyphs">BLDGCOR</text>
<text x="265.9" y="130.1" fill="#00e8ff" stroke="#00e8ff" stroke-width="0.18" font-size="6.8" textLength="26.6" lengthAdjust="spacingAndGlyphs">BLDGCOR</text>
<text x="269.9" y="133.7" fill="#00e8ff" stroke="#00e8ff" stroke-width="0.18" font-size="6.8" textLength="13.8" lengthAdjust="spacingAndGlyphs">6827</text>
<text x="277.9" y="137.2" fill="#00e8ff" stroke="#00e8ff" stroke-width="0.18" font-size="6.8" textLength="26.6" lengthAdjust="spacingAndGlyphs">BLDGCOR</text>
<text x="266.9" y="140.9" fill="#00e8ff" stroke="#00e8ff" stroke-width="0.18" font-size="6.8" textLength="26.6" lengthAdjust="spacingAndGlyphs">BLDGCOR</text>
<text x="345.0" y="70.6" fill="#00e8ff" stroke="#00e8ff" stroke-width="0.18" font-size="6.8" textLength="13.8" lengthAdjust="spacingAndGlyphs">6842</text>
<text x="343.8" y="77.2" fill="#00e8ff" stroke="#00e8ff" stroke-width="0.18" font-size="6.8" textLength="24.2" lengthAdjust="spacingAndGlyphs">BLDGCOR</text>
<text x="0" y="0" transform="translate(344.6,64.7) rotate(-47)" fill="#f0f000" stroke="#f0f000" stroke-width="0.18" font-size="6.8" textLength="15.1" lengthAdjust="spacingAndGlyphs">834.0</text>
<text x="343.9" y="107.3" fill="#00e8ff" stroke="#00e8ff" stroke-width="0.18" font-size="6.8" textLength="13.8" lengthAdjust="spacingAndGlyphs">6841</text>
<text x="342.7" y="113.9" fill="#00e8ff" stroke="#00e8ff" stroke-width="0.18" font-size="6.8" textLength="24.2" lengthAdjust="spacingAndGlyphs">BLDGCOR</text>
<text x="0" y="0" transform="translate(343.5,101.4) rotate(-47)" fill="#f0f000" stroke="#f0f000" stroke-width="0.18" font-size="6.8" textLength="15.1" lengthAdjust="spacingAndGlyphs">837.6</text>
<text x="350.6" y="113.6" fill="#00e8ff" stroke="#00e8ff" stroke-width="0.18" font-size="6.8" textLength="13.8" lengthAdjust="spacingAndGlyphs">6840</text>
<text x="349.4" y="120.2" fill="#00e8ff" stroke="#00e8ff" stroke-width="0.18" font-size="6.8" textLength="24.2" lengthAdjust="spacingAndGlyphs">BLDGCOR</text>
<text x="0" y="0" transform="translate(350.2,107.7) rotate(-47)" fill="#f0f000" stroke="#f0f000" stroke-width="0.18" font-size="6.8" textLength="15.1" lengthAdjust="spacingAndGlyphs">833.1</text>
<text x="403.6" y="47.7" fill="#00e8ff" stroke="#00e8ff" stroke-width="0.18" font-size="6.8" textLength="13.8" lengthAdjust="spacingAndGlyphs">6776</text>
<text x="402.4" y="54.3" fill="#00e8ff" stroke="#00e8ff" stroke-width="0.18" font-size="6.8" textLength="27.6" lengthAdjust="spacingAndGlyphs">SIDEWALK</text>
<text x="0" y="0" transform="translate(403.2,41.8) rotate(-47)" fill="#f0f000" stroke="#f0f000" stroke-width="0.18" font-size="6.8" textLength="15.1" lengthAdjust="spacingAndGlyphs">833.1</text>
<text x="404.5" y="54.5" fill="#00e8ff" stroke="#00e8ff" stroke-width="0.18" font-size="6.8" textLength="13.8" lengthAdjust="spacingAndGlyphs">6843</text>
<text x="404.0" y="61.5" fill="#00e8ff" stroke="#00e8ff" stroke-width="0.18" font-size="6.8" textLength="26.6" lengthAdjust="spacingAndGlyphs">BLDGCOR</text>
<text x="423.0" y="57.5" fill="#00e8ff" stroke="#00e8ff" stroke-width="0.18" font-size="6.8" textLength="26.6" lengthAdjust="spacingAndGlyphs">BLDGCOR</text>
</svg>
<div class="ab" style="left:39px;top:545px;width:586px;height:11px;background:#f0f0f0"></div>
<div class="ab" style="left:39px;top:556px;width:586px;height:5px;background:#e4e4e4"></div>
<svg class="ab" style="left:39px;top:545px" width="586" height="11" viewBox="39 545 586 11">
<rect x="39" y="545" width="586" height="11" fill="#f2f2f2"/>
<line x1="39" y1="555.5" x2="625" y2="555.5" stroke="#d8d8d8" stroke-width="1"/>
<g stroke="#b8b8b8" stroke-width="0.8" fill="#f0f0f0"><rect x="39.5" y="545.5" width="11" height="10"/><rect x="50.5" y="545.5" width="11" height="10"/><rect x="61.5" y="545.5" width="11" height="10"/><rect x="72.5" y="545.5" width="12" height="10"/></g>
<g fill="#101010"><rect x="42.5" y="547" width="1.3" height="7"/><path d="M48.5,547 v7 l-4,-3.5z"/><path d="M58.5,547 v7 l-4,-3.5z"/><path d="M65,547 v7 l4,-3.5z"/><path d="M76,547 v7 l4,-3.5z"/><rect x="80.5" y="547" width="1.3" height="7"/></g>
<path d="M88.2,545.6 l5.2,10.4 h29.9 l4.8,-10.4z" fill="#fbfbfb" stroke="none"/>
<path d="M88.2,545.6 L93.4,556 M123.3,556 L128.3,545.6 M127.3,548.5 Q127.8,553 129.5,556 M169.3,545.6 L174.5,556 M168,556 L171.2,550.5 M212.8,556 L218,546" stroke="#282828" stroke-width="0.9" fill="none"/>
<text x="96.7" y="553.6" font-size="9.2" font-weight="bold" fill="#101010" font-family="Liberation Sans" textLength="24" lengthAdjust="spacingAndGlyphs">Model</text>
<text x="135" y="553.6" font-size="9.2" fill="#202020" font-family="Liberation Sans" textLength="27.8" lengthAdjust="spacingAndGlyphs">Layout1</text>
<text x="179" y="553.6" font-size="9.2" fill="#202020" font-family="Liberation Sans" textLength="28.6" lengthAdjust="spacingAndGlyphs">Layout2</text>
</svg>
<div class="ab" style="left:39px;top:561px;width:586px;height:14.5px;background:linear-gradient(#c8c8c8,#bdbdbd 2px,#bcbcbc)"></div>
<svg class="ab" style="left:39px;top:561px" width="300" height="14"><text x="4" y="10.7" font-size="9.7" fill="#f8f8f8" stroke="#f8f8f8" stroke-width="0.15" font-family="Liberation Sans" textLength="142" lengthAdjust="spacingAndGlyphs">MicroSurvey CAD 2013 Command Bar</text></svg>
<div class="ab" style="left:39px;top:575px;width:586px;height:100px;background:#fff"></div>
<div class="ab cmd" style="left:41.3px;top:579.1px">Command: _ms_edit_raw_data
Using current traverse file: 4930A
Using current traverse file: 4930A
Command: ms_rescale
Command: _show_traverse
Using current traverse file: 4930A
Command: ms_rescale
Command: _show_traverse
Using current traverse file: 4930A
Command:</div>
<div class="ab" style="left:625.3px;top:0px;width:1px;height:675px;background:#6a7074"></div>
<div class="ab" style="left:626.3px;top:0px;width:3.7px;height:675px;background:linear-gradient(#e2f4fb 0,#d8eef8 22px,#5a6a72 26px,#2c3236 30px,#2c3236 540px,#6a8898 544px,#b8dcec 549px,#c4e4f4 675px)"></div>
<div class="ab" style="left:630px;top:0px;width:3px;height:675px;background:linear-gradient(90deg,#8a9094,#6c6c6c)"></div>
<div class="ab" style="left:630px;top:0px;width:3px;height:18px;background:linear-gradient(90deg,#b8c8d0,#9aa4aa)"></div>
<div class="ab" style="left:632px;top:0px;width:403px;height:2px;background:#dff0f8"></div>
<div class="ab" style="left:631.5px;top:1.5px;width:403.5px;height:16.5px;background:linear-gradient(#f8fafc,#e4ebf3 40%,#d6e0ec);border:1px solid #a8b4c0;border-bottom:none;border-radius:3px 3px 0 0"></div>
<div class="ab" style="left:632px;top:17px;width:403px;height:1px;background:#8c9098"></div>
<div class="ab" style="left:636.4px;top:4px;font-size:9.4px;line-height:12px;color:#6c6c70;white-space:nowrap">File</div>
<div class="ab" style="left:660px;top:4px;font-size:9.4px;line-height:12px;color:#6c6c70;white-space:nowrap">Edit</div>
<div class="ab" style="left:686px;top:4px;font-size:9.4px;line-height:12px;color:#6c6c70;white-space:nowrap">Cut Sheets</div>
<div class="ab" style="left:739px;top:4px;font-size:9.4px;line-height:12px;color:#6c6c70;white-space:nowrap">Window</div>
<div class="ab" style="left:783px;top:4px;font-size:9.4px;line-height:12px;color:#6c6c70;white-space:nowrap">Format</div>
<div class="ab" style="left:822px;top:4px;font-size:9.4px;line-height:12px;color:#6c6c70;white-space:nowrap">Help</div>
<div class="ab" style="left:632px;top:18px;width:387px;height:657px;background:#f0f0f0"></div>
<div class="ab" style="left:1019px;top:18px;width:16px;height:657px;background:linear-gradient(90deg,#e8e8e8,#f4f4f4 30%,#f0f0f0)"></div>
<div class="ab" style="left:1021.5px;top:445.2px;width:10.7px;height:17.4px;border:1px solid #a0a0a0;border-radius:2px;background:linear-gradient(90deg,#f4f4f4,#dcdcdc)"></div>
<div class="ab" style="left:1024px;top:451px;width:5px;height:5px;border-top:1px solid #606060;border-bottom:1px solid #606060"></div>
<div class="ab" style="left:1024px;top:453px;width:5px;height:1px;background:#606060"></div>
<div class="ab" style="left:1024.3px;top:23.8px;width:0;height:0;border-bottom:3px solid #404040;border-left:3px solid transparent;border-right:3px solid transparent"></div>
<div class="ab" style="left:1034.5px;top:0px;width:6px;height:675px;background:linear-gradient(#e6f6fc 0,#dff2fa 150px,#9ab0bc 165px,#151a1e 178px,#101418 520px,#8aa8b8 540px,#d8f0f8 560px,#e8f8fc 675px)"></div>
<div class="ab" style="left:1035px;top:0px;width:1px;height:675px;background:rgba(255,255,255,0.35)"></div>
<div class="ab" style="left:1035.5px;top:20px;width:4px;height:28px;background:linear-gradient(rgba(60,80,90,0),rgba(50,66,76,0.75) 50%,rgba(60,80,90,0))"></div>
<div class="ab" style="left:1040.5px;top:0px;width:22px;height:675px;background:#d6d6d6"></div>
<div class="ab" style="left:1040.5px;top:20px;width:4px;height:155px;background:linear-gradient(90deg,#7a8a94,#b8c8d0)"></div>
<div class="ab" style="left:1044.5px;top:24px;width:18px;height:334px;background:linear-gradient(90deg,#f0f0f0,#e2e2e2)"></div>
<div class="ab" style="left:1062px;top:0px;width:1px;height:675px;background:#b4b4b4"></div>
<div class="ab" style="left:1063px;top:0px;width:5px;height:675px;background:#fbfbfb"></div>
<div class="ab" style="left:1068px;top:0px;width:1px;height:675px;background:#7a7a7a"></div>
<div class="ab" style="left:1069px;top:0px;width:11px;height:675px;background:linear-gradient(90deg,#c4c4c4,#eeeeee 4px,#fdfdfd 7px,#fff)"></div>
<svg class="ab" style="left:17px;top:24px" width="22" height="352" viewBox="17 24 22 352"><rect x="17" y="24" width="22" height="352" fill="url(#lg)"/><defs><linearGradient id="lg" x1="0" x2="1"><stop offset="0" stop-color="#f6f6f6"/><stop offset="1" stop-color="#e4e4e4"/></linearGradient></defs><rect x="23.0" y="33.5" width="1.3" height="1.3" fill="#909090"/><rect x="25.6" y="33.5" width="1.3" height="1.3" fill="#909090"/><rect x="28.2" y="33.5" width="1.3" height="1.3" fill="#909090"/><rect x="30.8" y="33.5" width="1.3" height="1.3" fill="#909090"/><line x1="22" y1="57.3" x2="37" y2="57.3" stroke="#c8c8c8" stroke-width="0.8"/><line x1="22" y1="80.3" x2="37" y2="80.3" stroke="#c8c8c8" stroke-width="0.8"/><line x1="22" y1="168.7" x2="37" y2="168.7" stroke="#c8c8c8" stroke-width="0.8"/><line x1="22" y1="258.5" x2="37" y2="258.5" stroke="#c8c8c8" stroke-width="0.8"/><line x1="22" y1="297" x2="37" y2="297" stroke="#c8c8c8" stroke-width="0.8"/><line x1="22" y1="337" x2="37" y2="337" stroke="#c8c8c8" stroke-width="0.8"/><path d="M24,45.5 l3.5,-4.5 l0.6,2.4 l3.2,-0.8 l-0.8,2.6 l-3,0.6 l0.4,2.2z" fill="#2a86d8"/><path d="M36,47 l-3,4.5 l-0.8,-2.2 l-3.2,0.6 l0.8,-2.6 l3,-0.6 l-0.3,-2.2z" fill="#1a66c0"/><rect x="34.5" y="50.5" width="2" height="2" fill="#202020"/><path d="M24,66 l5,-3 l7,6 l-3,4z" fill="#c8a040" stroke="#806020" stroke-width="0.6"/><path d="M33,73 l3,-4 l1,1 l-3,4z" fill="#409040"/><line x1="27" y1="94" x2="24" y2="97" stroke="#e89030" stroke-width="1.8"/><circle cx="31" cy="90" r="4.6" fill="#dff0fa" stroke="#6aa8d8" stroke-width="0.9"/><path d="M28.5,90 h5 M31,87.5 v5" stroke="#10a040" stroke-width="1.8"/><line x1="27" y1="110" x2="24" y2="113" stroke="#e89030" stroke-width="1.8"/><circle cx="31" cy="106" r="4.6" fill="#dff0fa" stroke="#6aa8d8" stroke-width="0.9"/><path d="M28.5,106 h5" stroke="#e02020" stroke-width="1.8"/><line x1="27" y1="126" x2="24" y2="129" stroke="#e89030" stroke-width="1.8"/><circle cx="31" cy="122" r="4.6" fill="#dff0fa" stroke="#6aa8d8" stroke-width="0.9"/><rect x="27.5" y="119.5" width="7" height="6" fill="none" stroke="#1a3a80" stroke-width="0.9"/><line x1="27" y1="143" x2="24" y2="146" stroke="#e89030" stroke-width="1.8"/><circle cx="31" cy="139" r="4.6" fill="#dff0fa" stroke="#6aa8d8" stroke-width="0.9"/><path d="M31,135.5 v7 M27.5,139 h7" stroke="#1a3a80" stroke-width="0.9"/><line x1="27" y1="160" x2="24" y2="163" stroke="#e89030" stroke-width="1.8"/><circle cx="31" cy="156" r="4.6" fill="#dff0fa" stroke="#6aa8d8" stroke-width="0.9"/><path d="M26,152 a4,4 0 1 1 1,6" fill="none" stroke="#1a70d0" stroke-width="1.8"/><rect x="35" y="161" width="1.8" height="1.8" fill="#202020"/><path d="M23,178 l5,-3 l6,5 l-3,4z" fill="#c8a040" stroke="#806020" stroke-width="0.6"/><path d="M31,184 l3,-4 l1,1 l-3,4z" fill="#409040"/><rect x="32" y="174" width="4" height="4" fill="none" stroke="#c04040" stroke-width="0.8"/><ellipse cx="30" cy="193" rx="5.5" ry="3" fill="#e8f0f8" stroke="#c08070" stroke-width="0.8"/><circle cx="30" cy="193" r="2.4" fill="#2a78c0"/><circle cx="30" cy="193" r="0.9" fill="#0a2a50"/><path d="M25,197 a5,2.5 0 0 0 10,0" fill="none" stroke="#2a70c0" stroke-width="1.4"/><rect x="29" y="195.5" width="2" height="3" fill="#d03030"/><path d="M30,207 l6,6 l-6,6 l-6,-6z" fill="#208030" stroke="#101010" stroke-width="0.8"/><circle cx="30" cy="213" r="1.6" fill="#70e070"/><ellipse cx="30" cy="226" rx="5.5" ry="3" fill="#e8f0f8" stroke="#c08070" stroke-width="0.8"/><circle cx="30" cy="226" r="2.4" fill="#2a78c0"/><circle cx="30" cy="226" r="0.9" fill="#0a2a50"/><rect x="24.5" y="229" width="10" height="6" fill="#5a90d0" stroke="#3a6aa0" stroke-width="0.6"/><ellipse cx="31" cy="242" rx="5.5" ry="3" fill="#e8f0f8" stroke="#c08070" stroke-width="0.8"/><circle cx="31" cy="242" r="2.4" fill="#2a78c0"/><circle cx="31" cy="242" r="0.9" fill="#0a2a50"/><path d="M24,244 v6 h6" fill="none" stroke="#10c030" stroke-width="1"/><path d="M25,250 h6" stroke="#e03030" stroke-width="1.2"/><ellipse cx="30" cy="266" rx="5.5" ry="3" fill="#e8f0f8" stroke="#c08070" stroke-width="0.8"/><circle cx="30" cy="266" r="2.4" fill="#2a78c0"/><circle cx="30" cy="266" r="0.9" fill="#0a2a50"/><rect x="25.5" y="270" width="5" height="5" fill="#f0c040" opacity="0.8"/><ellipse cx="30" cy="285" rx="5.5" ry="3" fill="#e8f0f8" stroke="#c08070" stroke-width="0.8"/><circle cx="30" cy="285" r="2.4" fill="#2a78c0"/><circle cx="30" cy="285" r="0.9" fill="#0a2a50"/><path d="M25,307 l8,-6" stroke="#10c010" stroke-width="1"/><path d="M25,307 l8,5" stroke="#e02020" stroke-width="1"/><path d="M25,307 v-5" stroke="#2040e0" stroke-width="1"/><path d="M25,319 v10" stroke="#10c010" stroke-width="1.2"/><path d="M25,329 h10" stroke="#e02020" stroke-width="1.2"/><rect x="23.5" y="343" width="12" height="9" fill="#a8c8ec" stroke="#5a8ac8" stroke-width="0.7"/><path d="M23.5,346 h12 M29.5,346 v6 M23.5,349 h12" stroke="#fff" stroke-width="0.7"/><rect x="24" y="359" width="11" height="9" fill="#e8e8e8" stroke="#404040" stroke-width="0.9"/><rect x="26.5" y="361.5" width="6" height="4" fill="#c0d0e0" stroke="#808080" stroke-width="0.5"/></svg>
<svg class="ab" style="left:17px;top:3px" width="608" height="21" viewBox="17 3 608 21"><rect x="26.5" y="8.0" width="1.3" height="1.3" fill="#909090"/><rect x="26.5" y="10.6" width="1.3" height="1.3" fill="#909090"/><rect x="26.5" y="13.2" width="1.3" height="1.3" fill="#909090"/><rect x="26.5" y="15.8" width="1.3" height="1.3" fill="#909090"/><path d="M33.5,19.5 l3,-3 h9 l-3,3z" fill="#f0d040" stroke="#c0a020" stroke-width="0.4"/><path d="M33.5,16.5 l3,-3 h9 l-3,3z" fill="#e03040" stroke="#a01020" stroke-width="0.4"/><path d="M33.5,12.5 l3,-3.5 h9 l-3,3.5z" fill="#2a80c8" stroke="#1a5a98" stroke-width="0.4"/><rect x="37.5" y="14.5" width="4" height="4" fill="#e04020" stroke="#101010" stroke-width="1"/><g stroke="#3a9ae0" stroke-width="1.1"><path d="M56,9 v10 M51,14 h10 M52.5,10.5 l7,7 M59.5,10.5 l-7,7"/></g><circle cx="56" cy="14" r="1.8" fill="#1a70d0"/><rect x="58.5" y="16.5" width="3.5" height="3.5" fill="#404040"/><path d="M68,19.5 l3,-3 h9 l-3,3z" fill="#f0d040" stroke="#c0a020" stroke-width="0.4"/><path d="M68,16.5 l3,-3 h9 l-3,3z" fill="#e03040" stroke="#a01020" stroke-width="0.4"/><path d="M68,12.5 l3,-3.5 h9 l-3,3.5z" fill="#2a80c8" stroke="#1a5a98" stroke-width="0.4"/><circle cx="75" cy="14.5" r="3" fill="#d0ecfa" stroke="#7ab0d8" stroke-width="0.7"/><path d="M77,16.5 l2.5,2.5" stroke="#e0a040" stroke-width="1.2"/><line x1="86.6" y1="6" x2="86.6" y2="22" stroke="#c8c8c8" stroke-width="1"/><path d="M96,13 a3.5,3.5 0 1 1 5,0 v3 h-5z" fill="#f8f0a0" stroke="#b0a050" stroke-width="0.6"/><rect x="96.8" y="16" width="3.5" height="3" fill="#505050"/><g stroke="#202000" stroke-width="0.6"><circle cx="112" cy="14.5" r="3.2" fill="#f0f020"/></g><path d="M112,8.5 v12 M106,14.5 h12 M108,10.5 l8,8 M116,10.5 l-8,8" stroke="#d0d000" stroke-width="1.2"/><circle cx="112" cy="14.5" r="2.8" fill="#f8f860" stroke="#303000" stroke-width="0.5"/><rect x="120.5" y="10.5" width="7.5" height="8" fill="none" stroke="#c0c0c0" stroke-width="0.8"/><path d="M121,13 h6 M121,15.5 h6 M123,11 v7 M125.5,11 v7" stroke="#d0d0d0" stroke-width="0.5"/><rect x="133" y="14" width="7" height="6" fill="#f0b060"/><path d="M138,14 v-3 a2.5,2.5 0 0 1 5,0 v2" fill="none" stroke="#2050b0" stroke-width="1.1"/><rect x="146.5" y="10.5" width="8" height="9" fill="#fff" stroke="#303030" stroke-width="0.9"/><text x="157.5" y="18.3" font-size="9.5" fill="#1a1a1a" font-family="Liberation Sans">0</text><path d="M262,13 h6 l-3,3.5z" fill="#101010"/><path d="M381.6,13 h6 l-3,3.5z" fill="#101010"/><path d="M539,13 h6 l-3,3.5z" fill="#101010"/><line x1="274.4" y1="6" x2="274.4" y2="22" stroke="#c8c8c8" stroke-width="1"/><line x1="394" y1="6" x2="394" y2="22" stroke="#c8c8c8" stroke-width="1"/><line x1="553" y1="6" x2="553" y2="22" stroke="#c8c8c8" stroke-width="1"/><rect x="282.5" y="10.5" width="22.5" height="9" fill="#fff" stroke="#303030" stroke-width="0.9"/><text x="307.5" y="18.3" font-size="9.3" fill="#1a1a1a" font-family="Liberation Sans" textLength="37" lengthAdjust="spacingAndGlyphs">BYLAYER</text><line x1="402" y1="14.8" x2="464" y2="14.8" stroke="#202020" stroke-width="1"/><text x="470" y="18.3" font-size="9.3" fill="#1a1a1a" font-family="Liberation Sans" textLength="37" lengthAdjust="spacingAndGlyphs">BYLAYER</text><line x1="560" y1="14.8" x2="621" y2="14.8" stroke="#202020" stroke-width="1"/><rect x="623" y="11" width="2" height="7" fill="#806040"/></svg>
<svg class="ab" style="left:1036px;top:0px" width="27" height="675" viewBox="1036 0 27 675"><rect x="1045.5" y="33.2" width="1.3" height="1.3" fill="#909090"/><rect x="1048.1" y="33.2" width="1.3" height="1.3" fill="#909090"/><rect x="1050.7" y="33.2" width="1.3" height="1.3" fill="#909090"/><rect x="1053.3" y="33.2" width="1.3" height="1.3" fill="#909090"/><path d="M1052.3,41.5 v6.5 M1049,44.7 h6.5" stroke="#707070" stroke-width="0.9"/><path d="M1049,66 v-5.5 h5" stroke="#202020" stroke-width="0.9" fill="none"/><circle cx="1055.3" cy="60.3" r="1.6" fill="#f02020"/><rect x="1048" y="65" width="2" height="2" fill="#505050"/><path d="M1048.5,73 v11 M1057.5,73 v11" stroke="#202020" stroke-width="0.9" fill="none"/><circle cx="1049" cy="74" r="1.2" fill="#f02020"/><circle cx="1053" cy="78.7" r="1.6" fill="#f02020"/><circle cx="1058" cy="83.5" r="1.2" fill="#f02020"/><line x1="1045" y1="90.7" x2="1061" y2="90.7" stroke="#d0d0d0" stroke-width="0.8"/><circle cx="1052.5" cy="101.5" r="5.3" stroke="#202020" stroke-width="0.9" fill="none"/><circle cx="1056.5" cy="105" r="1.6" fill="#f02020"/><path d="M1047,113 l8,8" stroke="#202020" stroke-width="0.9" fill="none"/><circle cx="1055.3" cy="121" r="1.6" fill="#f02020"/><path d="M1047,130.7 h12 M1047,140 q5.5,-7 12,0" stroke="#202020" stroke-width="0.9" fill="none"/><circle cx="1052.7" cy="130.7" r="1.3" fill="#f02020"/><circle cx="1052.7" cy="136" r="1.3" fill="#f02020"/><circle cx="1052.3" cy="151" r="5.3" stroke="#202020" stroke-width="0.9" fill="none"/><circle cx="1052.3" cy="151" r="1.6" fill="#f02020"/><path d="M1052.5,162 v9 M1047,171 h12 M1054.5,171 v-2.5 h2.5" stroke="#202020" stroke-width="0.9" fill="none"/><circle cx="1052.5" cy="171" r="1.6" fill="#f02020"/><path d="M1049.5,179.5 l4,4.5" stroke="#202020" stroke-width="0.9" fill="none"/><circle cx="1053.5" cy="188" r="3" stroke="#202020" stroke-width="0.9" fill="none"/><circle cx="1055" cy="187" r="1.3" fill="#f02020"/><circle cx="1052.5" cy="201" r="5.2" stroke="#202020" stroke-width="0.9" fill="none"/><circle cx="1052.5" cy="195.8" r="1.3" fill="#f02020"/><circle cx="1052.5" cy="206.2" r="1.3" fill="#f02020"/><circle cx="1047.3" cy="201" r="1.3" fill="#f02020"/><circle cx="1057.7" cy="201" r="1.3" fill="#f02020"/><rect x="1048.5" y="214" width="9.5" height="7" stroke="#202020" stroke-width="0.9" fill="none"/><circle cx="1048.7" cy="221" r="1.6" fill="#f02020"/><rect x="1056" y="219.5" width="2" height="2" fill="#2060d0"/><rect x="1048.7" y="230" width="8" height="8" stroke="#202020" stroke-width="0.9" fill="none"/><path d="M1049,230.5 l7.5,7.5 M1056.5,230.5 l-7.5,7.5" stroke="#404040" stroke-width="0.6"/><circle cx="1052.7" cy="234" r="1.6" fill="#f02020"/><path d="M1047,246 l10,10" stroke="#202020" stroke-width="0.9" fill="none"/><circle cx="1052.3" cy="251.3" r="1.6" fill="#f02020"/><path d="M1047,265 l8,8 M1050,263 l7,7" stroke="#202020" stroke-width="0.9" fill="none"/><circle cx="1052" cy="270" r="1.6" fill="#f02020"/><line x1="1045" y1="279.7" x2="1061" y2="279.7" stroke="#d0d0d0" stroke-width="0.8"/><path d="M1047,287 l12,6 M1047,293 l12,-6" stroke="#202020" stroke-width="0.9" fill="none"/><circle cx="1052.5" cy="290" r="1.6" fill="#f02020"/><path d="M1047,301 l9.5,5.5 M1047,311 l9.5,-4.5" stroke="#202020" stroke-width="0.9" fill="none"/><circle cx="1056.5" cy="306.5" r="1.6" fill="#f02020"/><line x1="1045" y1="318.3" x2="1061" y2="318.3" stroke="#d0d0d0" stroke-width="0.8"/><circle cx="1055" cy="324.5" r="1.3" fill="#101010"/><path d="M1054,326 l-2,4 l3,2 l-1,3 M1052,330 l-3,1.5 M1054,327 l3,2 M1053,331 l-3,3" stroke="#101010" stroke-width="1.2" fill="none"/><rect x="1044.5" y="338.3" width="17" height="16.4" fill="#d8ecfa" stroke="#3aa0f0" stroke-width="0.8"/><path d="M1047,345.5 h11 M1049,341.5 l7,8 M1056,341.5 l-7,8" stroke="#f01010" stroke-width="1.1"/><circle cx="1047.5" cy="345.5" r="1.2" fill="#f02020"/><circle cx="1057.5" cy="345.5" r="1.2" fill="#f02020"/></svg>
<svg class="ab" style="left:632px;top:18px" width="387.3" height="657" viewBox="632 18 387.3 657" font-family="Liberation Sans">
<rect x="632.00" y="18.00" width="387.30" height="657.00" fill="#f0f0f0"/>
<line x1="632.00" y1="32.32" x2="649.40" y2="32.32" stroke="#8a8a8a" stroke-width="1"/>
<line x1="633.00" y1="19.60" x2="648.40" y2="19.60" stroke="#ffffff" stroke-width="0.9"/>
<line x1="632.00" y1="44.40" x2="649.40" y2="44.40" stroke="#8a8a8a" stroke-width="1"/>
<line x1="633.00" y1="33.32" x2="648.40" y2="33.32" stroke="#ffffff" stroke-width="0.9"/>
<line x1="632.00" y1="56.48" x2="649.40" y2="56.48" stroke="#8a8a8a" stroke-width="1"/>
<line x1="633.00" y1="45.40" x2="648.40" y2="45.40" stroke="#ffffff" stroke-width="0.9"/>
<line x1="632.00" y1="68.56" x2="649.40" y2="68.56" stroke="#8a8a8a" stroke-width="1"/>
<line x1="633.00" y1="57.48" x2="648.40" y2="57.48" stroke="#ffffff" stroke-width="0.9"/>
<line x1="632.00" y1="80.64" x2="649.40" y2="80.64" stroke="#8a8a8a" stroke-width="1"/>
<line x1="633.00" y1="69.56" x2="648.40" y2="69.56" stroke="#ffffff" stroke-width="0.9"/>
<line x1="632.00" y1="92.72" x2="649.40" y2="92.72" stroke="#8a8a8a" stroke-width="1"/>
<line x1="633.00" y1="81.64" x2="648.40" y2="81.64" stroke="#ffffff" stroke-width="0.9"/>
<line x1="632.00" y1="104.80" x2="649.40" y2="104.80" stroke="#8a8a8a" stroke-width="1"/>
<line x1="633.00" y1="93.72" x2="648.40" y2="93.72" stroke="#ffffff" stroke-width="0.9"/>
<line x1="632.00" y1="116.88" x2="649.40" y2="116.88" stroke="#8a8a8a" stroke-width="1"/>
<line x1="633.00" y1="105.80" x2="648.40" y2="105.80" stroke="#ffffff" stroke-width="0.9"/>
<line x1="632.00" y1="128.96" x2="649.40" y2="128.96" stroke="#8a8a8a" stroke-width="1"/>
<line x1="633.00" y1="117.88" x2="648.40" y2="117.88" stroke="#ffffff" stroke-width="0.9"/>
<line x1="632.00" y1="141.04" x2="649.40" y2="141.04" stroke="#8a8a8a" stroke-width="1"/>
<line x1="633.00" y1="129.96" x2="648.40" y2="129.96" stroke="#ffffff" stroke-width="0.9"/>
<line x1="632.00" y1="153.12" x2="649.40" y2="153.12" stroke="#8a8a8a" stroke-width="1"/>
<line x1="633.00" y1="142.04" x2="648.40" y2="142.04" stroke="#ffffff" stroke-width="0.9"/>
<line x1="632.00" y1="165.20" x2="649.40" y2="165.20" stroke="#8a8a8a" stroke-width="1"/>
<line x1="633.00" y1="154.12" x2="648.40" y2="154.12" stroke="#ffffff" stroke-width="0.9"/>
<line x1="632.00" y1="177.28" x2="649.40" y2="177.28" stroke="#8a8a8a" stroke-width="1"/>
<line x1="633.00" y1="166.20" x2="648.40" y2="166.20" stroke="#ffffff" stroke-width="0.9"/>
<line x1="632.00" y1="189.36" x2="649.40" y2="189.36" stroke="#8a8a8a" stroke-width="1"/>
<line x1="633.00" y1="178.28" x2="648.40" y2="178.28" stroke="#ffffff" stroke-width="0.9"/>
<line x1="632.00" y1="201.44" x2="649.40" y2="201.44" stroke="#8a8a8a" stroke-width="1"/>
<line x1="633.00" y1="190.36" x2="648.40" y2="190.36" stroke="#ffffff" stroke-width="0.9"/>
<line x1="632.00" y1="213.52" x2="649.40" y2="213.52" stroke="#8a8a8a" stroke-width="1"/>
<line x1="633.00" y1="202.44" x2="648.40" y2="202.44" stroke="#ffffff" stroke-width="0.9"/>
<line x1="632.00" y1="225.60" x2="649.40" y2="225.60" stroke="#8a8a8a" stroke-width="1"/>
<line x1="633.00" y1="214.52" x2="648.40" y2="214.52" stroke="#ffffff" stroke-width="0.9"/>
<line x1="632.00" y1="237.68" x2="649.40" y2="237.68" stroke="#8a8a8a" stroke-width="1"/>
<line x1="633.00" y1="226.60" x2="648.40" y2="226.60" stroke="#ffffff" stroke-width="0.9"/>
<line x1="632.00" y1="249.76" x2="649.40" y2="249.76" stroke="#8a8a8a" stroke-width="1"/>
<line x1="633.00" y1="238.68" x2="648.40" y2="238.68" stroke="#ffffff" stroke-width="0.9"/>
<line x1="632.00" y1="261.84" x2="649.40" y2="261.84" stroke="#8a8a8a" stroke-width="1"/>
<line x1="633.00" y1="250.76" x2="648.40" y2="250.76" stroke="#ffffff" stroke-width="0.9"/>
<line x1="632.00" y1="273.92" x2="649.40" y2="273.92" stroke="#8a8a8a" stroke-width="1"/>
<line x1="633.00" y1="262.84" x2="648.40" y2="262.84" stroke="#ffffff" stroke-width="0.9"/>
<line x1="632.00" y1="286.00" x2="649.40" y2="286.00" stroke="#8a8a8a" stroke-width="1"/>
<line x1="633.00" y1="274.92" x2="648.40" y2="274.92" stroke="#ffffff" stroke-width="0.9"/>
<line x1="632.00" y1="298.08" x2="649.40" y2="298.08" stroke="#8a8a8a" stroke-width="1"/>
<line x1="633.00" y1="287.00" x2="648.40" y2="287.00" stroke="#ffffff" stroke-width="0.9"/>
<line x1="632.00" y1="310.16" x2="649.40" y2="310.16" stroke="#8a8a8a" stroke-width="1"/>
<line x1="633.00" y1="299.08" x2="648.40" y2="299.08" stroke="#ffffff" stroke-width="0.9"/>
<line x1="632.00" y1="322.24" x2="649.40" y2="322.24" stroke="#8a8a8a" stroke-width="1"/>
<line x1="633.00" y1="311.16" x2="648.40" y2="311.16" stroke="#ffffff" stroke-width="0.9"/>
<line x1="632.00" y1="334.32" x2="649.40" y2="334.32" stroke="#8a8a8a" stroke-width="1"/>
<line x1="633.00" y1="323.24" x2="648.40" y2="323.24" stroke="#ffffff" stroke-width="0.9"/>
<line x1="632.00" y1="346.40" x2="649.40" y2="346.40" stroke="#8a8a8a" stroke-width="1"/>
<line x1="633.00" y1="335.32" x2="648.40" y2="335.32" stroke="#ffffff" stroke-width="0.9"/>
<line x1="632.00" y1="358.48" x2="649.40" y2="358.48" stroke="#8a8a8a" stroke-width="1"/>
<line x1="633.00" y1="347.40" x2="648.40" y2="347.40" stroke="#ffffff" stroke-width="0.9"/>
<line x1="632.00" y1="370.56" x2="649.40" y2="370.56" stroke="#8a8a8a" stroke-width="1"/>
<line x1="633.00" y1="359.48" x2="648.40" y2="359.48" stroke="#ffffff" stroke-width="0.9"/>
<line x1="632.00" y1="382.64" x2="649.40" y2="382.64" stroke="#8a8a8a" stroke-width="1"/>
<line x1="633.00" y1="371.56" x2="648.40" y2="371.56" stroke="#ffffff" stroke-width="0.9"/>
<line x1="632.00" y1="394.72" x2="649.40" y2="394.72" stroke="#8a8a8a" stroke-width="1"/>
<line x1="633.00" y1="383.64" x2="648.40" y2="383.64" stroke="#ffffff" stroke-width="0.9"/>
<line x1="632.00" y1="406.80" x2="649.40" y2="406.80" stroke="#8a8a8a" stroke-width="1"/>
<line x1="633.00" y1="395.72" x2="648.40" y2="395.72" stroke="#ffffff" stroke-width="0.9"/>
<line x1="632.00" y1="418.88" x2="649.40" y2="418.88" stroke="#8a8a8a" stroke-width="1"/>
<line x1="633.00" y1="407.80" x2="648.40" y2="407.80" stroke="#ffffff" stroke-width="0.9"/>
<line x1="632.00" y1="430.96" x2="649.40" y2="430.96" stroke="#8a8a8a" stroke-width="1"/>
<line x1="633.00" y1="419.88" x2="648.40" y2="419.88" stroke="#ffffff" stroke-width="0.9"/>
<line x1="632.00" y1="443.04" x2="649.40" y2="443.04" stroke="#8a8a8a" stroke-width="1"/>
<line x1="633.00" y1="431.96" x2="648.40" y2="431.96" stroke="#ffffff" stroke-width="0.9"/>
<line x1="632.00" y1="455.12" x2="649.40" y2="455.12" stroke="#8a8a8a" stroke-width="1"/>
<line x1="633.00" y1="444.04" x2="648.40" y2="444.04" stroke="#ffffff" stroke-width="0.9"/>
<line x1="632.00" y1="467.20" x2="649.40" y2="467.20" stroke="#8a8a8a" stroke-width="1"/>
<line x1="633.00" y1="456.12" x2="648.40" y2="456.12" stroke="#ffffff" stroke-width="0.9"/>
<line x1="632.00" y1="479.28" x2="649.40" y2="479.28" stroke="#8a8a8a" stroke-width="1"/>
<line x1="633.00" y1="468.20" x2="648.40" y2="468.20" stroke="#ffffff" stroke-width="0.9"/>
<line x1="632.00" y1="491.36" x2="649.40" y2="491.36" stroke="#8a8a8a" stroke-width="1"/>
<line x1="633.00" y1="480.28" x2="648.40" y2="480.28" stroke="#ffffff" stroke-width="0.9"/>
<line x1="632.00" y1="503.44" x2="649.40" y2="503.44" stroke="#8a8a8a" stroke-width="1"/>
<line x1="633.00" y1="492.36" x2="648.40" y2="492.36" stroke="#ffffff" stroke-width="0.9"/>
<line x1="632.00" y1="515.52" x2="649.40" y2="515.52" stroke="#8a8a8a" stroke-width="1"/>
<line x1="633.00" y1="504.44" x2="648.40" y2="504.44" stroke="#ffffff" stroke-width="0.9"/>
<line x1="632.00" y1="527.60" x2="649.40" y2="527.60" stroke="#8a8a8a" stroke-width="1"/>
<line x1="633.00" y1="516.52" x2="648.40" y2="516.52" stroke="#ffffff" stroke-width="0.9"/>
<line x1="632.00" y1="539.68" x2="649.40" y2="539.68" stroke="#8a8a8a" stroke-width="1"/>
<line x1="633.00" y1="528.60" x2="648.40" y2="528.60" stroke="#ffffff" stroke-width="0.9"/>
<line x1="632.00" y1="551.76" x2="649.40" y2="551.76" stroke="#8a8a8a" stroke-width="1"/>
<line x1="633.00" y1="540.68" x2="648.40" y2="540.68" stroke="#ffffff" stroke-width="0.9"/>
<line x1="632.00" y1="563.84" x2="649.40" y2="563.84" stroke="#8a8a8a" stroke-width="1"/>
<line x1="633.00" y1="552.76" x2="648.40" y2="552.76" stroke="#ffffff" stroke-width="0.9"/>
<line x1="632.00" y1="575.92" x2="649.40" y2="575.92" stroke="#8a8a8a" stroke-width="1"/>
<line x1="633.00" y1="564.84" x2="648.40" y2="564.84" stroke="#ffffff" stroke-width="0.9"/>
<line x1="632.00" y1="588.00" x2="649.40" y2="588.00" stroke="#8a8a8a" stroke-width="1"/>
<line x1="633.00" y1="576.92" x2="648.40" y2="576.92" stroke="#ffffff" stroke-width="0.9"/>
<line x1="632.00" y1="600.08" x2="649.40" y2="600.08" stroke="#8a8a8a" stroke-width="1"/>
<line x1="633.00" y1="589.00" x2="648.40" y2="589.00" stroke="#ffffff" stroke-width="0.9"/>
<line x1="632.00" y1="612.16" x2="649.40" y2="612.16" stroke="#8a8a8a" stroke-width="1"/>
<line x1="633.00" y1="601.08" x2="648.40" y2="601.08" stroke="#ffffff" stroke-width="0.9"/>
<line x1="632.00" y1="624.24" x2="649.40" y2="624.24" stroke="#8a8a8a" stroke-width="1"/>
<line x1="633.00" y1="613.16" x2="648.40" y2="613.16" stroke="#ffffff" stroke-width="0.9"/>
<line x1="632.00" y1="636.32" x2="649.40" y2="636.32" stroke="#8a8a8a" stroke-width="1"/>
<line x1="633.00" y1="625.24" x2="648.40" y2="625.24" stroke="#ffffff" stroke-width="0.9"/>
<line x1="632.00" y1="648.40" x2="649.40" y2="648.40" stroke="#8a8a8a" stroke-width="1"/>
<line x1="633.00" y1="637.32" x2="648.40" y2="637.32" stroke="#ffffff" stroke-width="0.9"/>
<line x1="632.00" y1="660.48" x2="649.40" y2="660.48" stroke="#8a8a8a" stroke-width="1"/>
<line x1="633.00" y1="649.40" x2="648.40" y2="649.40" stroke="#ffffff" stroke-width="0.9"/>
<line x1="632.00" y1="672.56" x2="649.40" y2="672.56" stroke="#8a8a8a" stroke-width="1"/>
<line x1="633.00" y1="661.48" x2="648.40" y2="661.48" stroke="#ffffff" stroke-width="0.9"/>
<line x1="632.00" y1="684.64" x2="649.40" y2="684.64" stroke="#8a8a8a" stroke-width="1"/>
<line x1="633.00" y1="673.56" x2="648.40" y2="673.56" stroke="#ffffff" stroke-width="0.9"/>
<line x1="649.40" y1="18.00" x2="649.40" y2="675.00" stroke="#808080" stroke-width="1"/>
<line x1="632.00" y1="18.60" x2="649.40" y2="18.60" stroke="#8a8a8a" stroke-width="1"/>
<rect x="649.90" y="18.60" width="369.40" height="13.72" fill="#ffff00"/>
<rect x="649.90" y="32.32" width="52.00" height="12.08" fill="#ffff00"/>
<rect x="701.90" y="32.32" width="317.40" height="12.08" fill="#ffffff"/>
<rect x="649.90" y="44.40" width="369.40" height="24.16" fill="#fff9d0"/>
<rect x="649.90" y="68.56" width="52.00" height="84.56" fill="#dedede"/>
<rect x="701.90" y="68.56" width="317.40" height="84.56" fill="#ececec"/>
<rect x="649.90" y="153.12" width="369.40" height="12.08" fill="#dcdcfc"/>
<rect x="649.90" y="165.20" width="369.40" height="12.08" fill="#00a2ff"/>
<rect x="649.90" y="177.28" width="369.40" height="12.08" fill="#00a2ff"/>
<rect x="649.90" y="189.36" width="369.40" height="12.08" fill="#00a2ff"/>
<rect x="649.90" y="201.44" width="369.40" height="12.08" fill="#00a2ff"/>
<rect x="649.90" y="213.52" width="369.40" height="12.08" fill="#00a2ff"/>
<rect x="649.90" y="225.60" width="369.40" height="12.08" fill="#00a2ff"/>
<rect x="649.90" y="237.68" width="369.40" height="12.08" fill="#00a2ff"/>
<rect x="649.90" y="249.76" width="369.40" height="12.08" fill="#00a2ff"/>
<rect x="649.90" y="261.84" width="369.40" height="12.08" fill="#00a2ff"/>
<rect x="649.90" y="273.92" width="369.40" height="12.08" fill="#00a2ff"/>
<rect x="649.90" y="286.00" width="369.40" height="12.08" fill="#00a2ff"/>
<rect x="649.90" y="298.08" width="369.40" height="12.08" fill="#00a2ff"/>
<rect x="649.90" y="310.16" width="369.40" height="12.08" fill="#00a2ff"/>
<rect x="649.90" y="322.24" width="369.40" height="12.08" fill="#00a2ff"/>
<rect x="649.90" y="334.32" width="369.40" height="12.08" fill="#00a2ff"/>
<rect x="649.90" y="346.40" width="369.40" height="12.08" fill="#00a2ff"/>
<rect x="649.90" y="358.48" width="369.40" height="12.08" fill="#00a2ff"/>
<rect x="649.90" y="370.56" width="369.40" height="12.08" fill="#00a2ff"/>
<rect x="649.90" y="382.64" width="369.40" height="12.08" fill="#00a2ff"/>
<rect x="649.90" y="394.72" width="369.40" height="12.08" fill="#00a2ff"/>
<rect x="649.90" y="406.80" width="369.40" height="12.08" fill="#00a2ff"/>
<rect x="649.90" y="418.88" width="369.40" height="12.08" fill="#00a2ff"/>
<rect x="649.90" y="430.96" width="369.40" height="12.08" fill="#00a2ff"/>
<rect x="649.90" y="443.04" width="369.40" height="12.08" fill="#00a2ff"/>
<rect x="649.90" y="455.12" width="369.40" height="12.08" fill="#00a2ff"/>
<rect x="649.90" y="467.20" width="369.40" height="12.08" fill="#00a2ff"/>
<rect x="649.90" y="479.28" width="369.40" height="12.08" fill="#00a2ff"/>
<rect x="649.90" y="491.36" width="369.40" height="12.08" fill="#00a2ff"/>
<rect x="649.90" y="503.44" width="369.40" height="12.08" fill="#00a2ff"/>
<rect x="649.90" y="515.52" width="369.40" height="12.08" fill="#00a2ff"/>
<rect x="649.90" y="527.60" width="369.40" height="12.08" fill="#00a2ff"/>
<rect x="649.90" y="539.68" width="369.40" height="12.08" fill="#00a2ff"/>
<rect x="649.90" y="551.76" width="369.40" height="12.08" fill="#00a2ff"/>
<rect x="649.90" y="563.84" width="369.40" height="12.08" fill="#00a2ff"/>
<rect x="649.90" y="575.92" width="369.40" height="12.08" fill="#00a2ff"/>
<rect x="649.90" y="588.00" width="369.40" height="12.08" fill="#00a2ff"/>
<rect x="649.90" y="600.08" width="369.40" height="12.08" fill="#00a2ff"/>
<rect x="649.90" y="612.16" width="369.40" height="12.08" fill="#00a2ff"/>
<rect x="649.90" y="624.24" width="369.40" height="12.08" fill="#00a2ff"/>
<rect x="649.90" y="636.32" width="369.40" height="12.08" fill="#00a2ff"/>
<rect x="649.90" y="648.40" width="52.00" height="12.08" fill="#dcdcfc"/>
<rect x="701.90" y="648.40" width="317.40" height="12.08" fill="#ffffff"/>
<rect x="649.90" y="660.48" width="52.00" height="12.08" fill="#dcdcfc"/>
<rect x="701.90" y="660.48" width="317.40" height="12.08" fill="#ffffff"/>
<rect x="649.90" y="672.56" width="52.00" height="17.08" fill="#dcdcfc"/>
<rect x="701.90" y="672.56" width="317.40" height="17.08" fill="#ffffff"/>
<line x1="649.40" y1="18.60" x2="1019.30" y2="18.60" stroke="#909090" stroke-width="1"/>
<line x1="649.40" y1="32.32" x2="1019.30" y2="32.32" stroke="#7c7c7c" stroke-width="1"/>
<line x1="649.40" y1="44.40" x2="1019.30" y2="44.40" stroke="#1c1c1c" stroke-width="1"/>
<line x1="649.40" y1="56.48" x2="1019.30" y2="56.48" stroke="#1c1c1c" stroke-width="1"/>
<line x1="649.40" y1="68.56" x2="1019.30" y2="68.56" stroke="#7c7c7c" stroke-width="1"/>
<line x1="701.90" y1="80.64" x2="1019.30" y2="80.64" stroke="#7c7c7c" stroke-width="1"/>
<line x1="701.90" y1="92.72" x2="1019.30" y2="92.72" stroke="#7c7c7c" stroke-width="1"/>
<line x1="701.90" y1="104.80" x2="1019.30" y2="104.80" stroke="#7c7c7c" stroke-width="1"/>
<line x1="701.90" y1="116.88" x2="1019.30" y2="116.88" stroke="#7c7c7c" stroke-width="1"/>
<line x1="701.90" y1="128.96" x2="1019.30" y2="128.96" stroke="#7c7c7c" stroke-width="1"/>
<line x1="701.90" y1="141.04" x2="1019.30" y2="141.04" stroke="#7c7c7c" stroke-width="1"/>
<line x1="701.90" y1="153.12" x2="1019.30" y2="153.12" stroke="#7c7c7c" stroke-width="1"/>
<line x1="649.40" y1="165.20" x2="1019.30" y2="165.20" stroke="#7c7c7c" stroke-width="1"/>
<line x1="649.40" y1="177.28" x2="1019.30" y2="177.28" stroke="#5c7080" stroke-width="1"/>
<line x1="649.40" y1="189.36" x2="1019.30" y2="189.36" stroke="#5c7080" stroke-width="1"/>
<line x1="649.40" y1="201.44" x2="1019.30" y2="201.44" stroke="#5c7080" stroke-width="1"/>
<line x1="649.40" y1="213.52" x2="1019.30" y2="213.52" stroke="#5c7080" stroke-width="1"/>
<line x1="649.40" y1="225.60" x2="1019.30" y2="225.60" stroke="#5c7080" stroke-width="1"/>
<line x1="649.40" y1="237.68" x2="1019.30" y2="237.68" stroke="#5c7080" stroke-width="1"/>
<line x1="649.40" y1="249.76" x2="1019.30" y2="249.76" stroke="#5c7080" stroke-width="1"/>
<line x1="649.40" y1="261.84" x2="1019.30" y2="261.84" stroke="#5c7080" stroke-width="1"/>
<line x1="649.40" y1="273.92" x2="1019.30" y2="273.92" stroke="#5c7080" stroke-width="1"/>
<line x1="649.40" y1="286.00" x2="1019.30" y2="286.00" stroke="#5c7080" stroke-width="1"/>
<line x1="649.40" y1="298.08" x2="1019.30" y2="298.08" stroke="#5c7080" stroke-width="1"/>
<line x1="649.40" y1="310.16" x2="1019.30" y2="310.16" stroke="#5c7080" stroke-width="1"/>
<line x1="649.40" y1="322.24" x2="1019.30" y2="322.24" stroke="#5c7080" stroke-width="1"/>
<line x1="649.40" y1="334.32" x2="1019.30" y2="334.32" stroke="#5c7080" stroke-width="1"/>
<line x1="649.40" y1="346.40" x2="1019.30" y2="346.40" stroke="#5c7080" stroke-width="1"/>
<line x1="649.40" y1="358.48" x2="1019.30" y2="358.48" stroke="#5c7080" stroke-width="1"/>
<line x1="649.40" y1="370.56" x2="1019.30" y2="370.56" stroke="#5c7080" stroke-width="1"/>
<line x1="649.40" y1="382.64" x2="1019.30" y2="382.64" stroke="#5c7080" stroke-width="1"/>
<line x1="649.40" y1="394.72" x2="1019.30" y2="394.72" stroke="#5c7080" stroke-width="1"/>
<line x1="649.40" y1="406.80" x2="1019.30" y2="406.80" stroke="#5c7080" stroke-width="1"/>
<line x1="649.40" y1="418.88" x2="1019.30" y2="418.88" stroke="#5c7080" stroke-width="1"/>
<line x1="649.40" y1="430.96" x2="1019.30" y2="430.96" stroke="#5c7080" stroke-width="1"/>
<line x1="649.40" y1="443.04" x2="1019.30" y2="443.04" stroke="#5c7080" stroke-width="1"/>
<line x1="649.40" y1="455.12" x2="1019.30" y2="455.12" stroke="#5c7080" stroke-width="1"/>
<line x1="649.40" y1="467.20" x2="1019.30" y2="467.20" stroke="#5c7080" stroke-width="1"/>
<line x1="649.40" y1="479.28" x2="1019.30" y2="479.28" stroke="#5c7080" stroke-width="1"/>
<line x1="649.40" y1="491.36" x2="1019.30" y2="491.36" stroke="#5c7080" stroke-width="1"/>
<line x1="649.40" y1="503.44" x2="1019.30" y2="503.44" stroke="#5c7080" stroke-width="1"/>
<line x1="649.40" y1="515.52" x2="1019.30" y2="515.52" stroke="#5c7080" stroke-width="1"/>
<line x1="649.40" y1="527.60" x2="1019.30" y2="527.60" stroke="#5c7080" stroke-width="1"/>
<line x1="649.40" y1="539.68" x2="1019.30" y2="539.68" stroke="#5c7080" stroke-width="1"/>
<line x1="649.40" y1="551.76" x2="1019.30" y2="551.76" stroke="#5c7080" stroke-width="1"/>
<line x1="649.40" y1="563.84" x2="1019.30" y2="563.84" stroke="#5c7080" stroke-width="1"/>
<line x1="649.40" y1="575.92" x2="1019.30" y2="575.92" stroke="#5c7080" stroke-width="1"/>
<line x1="649.40" y1="588.00" x2="1019.30" y2="588.00" stroke="#5c7080" stroke-width="1"/>
<line x1="649.40" y1="600.08" x2="1019.30" y2="600.08" stroke="#5c7080" stroke-width="1"/>
<line x1="649.40" y1="612.16" x2="1019.30" y2="612.16" stroke="#5c7080" stroke-width="1"/>
<line x1="649.40" y1="624.24" x2="1019.30" y2="624.24" stroke="#5c7080" stroke-width="1"/>
<line x1="649.40" y1="636.32" x2="1019.30" y2="636.32" stroke="#5c7080" stroke-width="1"/>
<line x1="649.40" y1="648.40" x2="1019.30" y2="648.40" stroke="#5c7080" stroke-width="1"/>
<line x1="649.40" y1="660.48" x2="1019.30" y2="660.48" stroke="#7c7c7c" stroke-width="1"/>
<line x1="649.40" y1="672.56" x2="1019.30" y2="672.56" stroke="#7c7c7c" stroke-width="1"/>
<line x1="649.40" y1="684.64" x2="1019.30" y2="684.64" stroke="#7c7c7c" stroke-width="1"/>
<line x1="701.90" y1="18.60" x2="701.90" y2="68.56" stroke="#7c7c7c" stroke-width="1"/>
<line x1="754.70" y1="18.60" x2="754.70" y2="68.56" stroke="#7c7c7c" stroke-width="1"/>
<line x1="807.60" y1="18.60" x2="807.60" y2="68.56" stroke="#7c7c7c" stroke-width="1"/>
<line x1="860.60" y1="18.60" x2="860.60" y2="68.56" stroke="#7c7c7c" stroke-width="1"/>
<line x1="913.60" y1="18.60" x2="913.60" y2="68.56" stroke="#7c7c7c" stroke-width="1"/>
<line x1="966.50" y1="18.60" x2="966.50" y2="68.56" stroke="#7c7c7c" stroke-width="1"/>
<line x1="1019.30" y1="18.60" x2="1019.30" y2="68.56" stroke="#7c7c7c" stroke-width="1"/>
<line x1="701.90" y1="153.12" x2="701.90" y2="675.00" stroke="#5c7080" stroke-width="1"/>
<line x1="754.70" y1="153.12" x2="754.70" y2="675.00" stroke="#5c7080" stroke-width="1"/>
<line x1="807.60" y1="153.12" x2="807.60" y2="675.00" stroke="#5c7080" stroke-width="1"/>
<line x1="860.60" y1="153.12" x2="860.60" y2="675.00" stroke="#5c7080" stroke-width="1"/>
<line x1="913.60" y1="153.12" x2="913.60" y2="675.00" stroke="#5c7080" stroke-width="1"/>
<line x1="966.50" y1="153.12" x2="966.50" y2="675.00" stroke="#5c7080" stroke-width="1"/>
<line x1="1019.30" y1="153.12" x2="1019.30" y2="675.00" stroke="#7c7c7c" stroke-width="1"/>
<line x1="1019.30" y1="68.56" x2="1019.30" y2="153.12" stroke="#7c7c7c" stroke-width="1"/>
<line x1="701.90" y1="32.32" x2="701.90" y2="44.40" stroke="#1c1c1c" stroke-width="1"/>
<line x1="649.40" y1="32.32" x2="701.90" y2="32.32" stroke="#1c1c1c" stroke-width="1"/>
<line x1="649.40" y1="44.40" x2="701.90" y2="44.40" stroke="#1c1c1c" stroke-width="1"/>
<line x1="701.90" y1="44.40" x2="701.90" y2="56.48" stroke="#1c1c1c" stroke-width="1"/>
<line x1="754.70" y1="44.40" x2="754.70" y2="56.48" stroke="#1c1c1c" stroke-width="1"/>
<line x1="807.60" y1="44.40" x2="807.60" y2="56.48" stroke="#1c1c1c" stroke-width="1"/>
<line x1="860.60" y1="44.40" x2="860.60" y2="56.48" stroke="#1c1c1c" stroke-width="1"/>
<line x1="913.60" y1="44.40" x2="913.60" y2="56.48" stroke="#1c1c1c" stroke-width="1"/>
<line x1="1018.80" y1="44.40" x2="1018.80" y2="56.48" stroke="#1c1c1c" stroke-width="1"/>
<line x1="649.40" y1="56.48" x2="1019.30" y2="56.48" stroke="#1c1c1c" stroke-width="1"/>
<line x1="649.40" y1="80.64" x2="701.90" y2="80.64" stroke="#1c1c1c" stroke-width="1"/>
<line x1="650.40" y1="69.56" x2="700.90" y2="69.56" stroke="#f8f8f8" stroke-width="0.8"/>
<line x1="649.40" y1="92.72" x2="701.90" y2="92.72" stroke="#1c1c1c" stroke-width="1"/>
<line x1="650.40" y1="81.64" x2="700.90" y2="81.64" stroke="#f8f8f8" stroke-width="0.8"/>
<line x1="649.40" y1="104.80" x2="701.90" y2="104.80" stroke="#1c1c1c" stroke-width="1"/>
<line x1="650.40" y1="93.72" x2="700.90" y2="93.72" stroke="#f8f8f8" stroke-width="0.8"/>
<line x1="649.40" y1="116.88" x2="701.90" y2="116.88" stroke="#1c1c1c" stroke-width="1"/>
<line x1="650.40" y1="105.80" x2="700.90" y2="105.80" stroke="#f8f8f8" stroke-width="0.8"/>
<line x1="649.40" y1="128.96" x2="701.90" y2="128.96" stroke="#1c1c1c" stroke-width="1"/>
<line x1="650.40" y1="117.88" x2="700.90" y2="117.88" stroke="#f8f8f8" stroke-width="0.8"/>
<line x1="649.40" y1="141.04" x2="701.90" y2="141.04" stroke="#1c1c1c" stroke-width="1"/>
<line x1="650.40" y1="129.96" x2="700.90" y2="129.96" stroke="#f8f8f8" stroke-width="0.8"/>
<line x1="649.40" y1="153.12" x2="701.90" y2="153.12" stroke="#1c1c1c" stroke-width="1"/>
<line x1="650.40" y1="142.04" x2="700.90" y2="142.04" stroke="#f8f8f8" stroke-width="0.8"/>
<line x1="701.90" y1="68.56" x2="701.90" y2="153.12" stroke="#1c1c1c" stroke-width="1"/>
<line x1="649.40" y1="177.28" x2="701.90" y2="177.28" stroke="#1c1c1c" stroke-width="1"/>
<line x1="650.40" y1="166.20" x2="700.90" y2="166.20" stroke="#d8f4ff" stroke-width="0.9"/>
<line x1="649.40" y1="189.36" x2="701.90" y2="189.36" stroke="#1c1c1c" stroke-width="1"/>
<line x1="650.40" y1="178.28" x2="700.90" y2="178.28" stroke="#d8f4ff" stroke-width="0.9"/>
<line x1="649.40" y1="201.44" x2="701.90" y2="201.44" stroke="#1c1c1c" stroke-width="1"/>
<line x1="650.40" y1="190.36" x2="700.90" y2="190.36" stroke="#d8f4ff" stroke-width="0.9"/>
<line x1="649.40" y1="213.52" x2="701.90" y2="213.52" stroke="#1c1c1c" stroke-width="1"/>
<line x1="650.40" y1="202.44" x2="700.90" y2="202.44" stroke="#d8f4ff" stroke-width="0.9"/>
<line x1="649.40" y1="225.60" x2="701.90" y2="225.60" stroke="#1c1c1c" stroke-width="1"/>
<line x1="650.40" y1="214.52" x2="700.90" y2="214.52" stroke="#d8f4ff" stroke-width="0.9"/>
<line x1="649.40" y1="237.68" x2="701.90" y2="237.68" stroke="#1c1c1c" stroke-width="1"/>
<line x1="650.40" y1="226.60" x2="700.90" y2="226.60" stroke="#d8f4ff" stroke-width="0.9"/>
<line x1="649.40" y1="249.76" x2="701.90" y2="249.76" stroke="#1c1c1c" stroke-width="1"/>
<line x1="650.40" y1="238.68" x2="700.90" y2="238.68" stroke="#d8f4ff" stroke-width="0.9"/>
<line x1="649.40" y1="261.84" x2="701.90" y2="261.84" stroke="#1c1c1c" stroke-width="1"/>
<line x1="650.40" y1="250.76" x2="700.90" y2="250.76" stroke="#d8f4ff" stroke-width="0.9"/>
<line x1="649.40" y1="273.92" x2="701.90" y2="273.92" stroke="#1c1c1c" stroke-width="1"/>
<line x1="650.40" y1="262.84" x2="700.90" y2="262.84" stroke="#d8f4ff" stroke-width="0.9"/>
<line x1="649.40" y1="286.00" x2="701.90" y2="286.00" stroke="#1c1c1c" stroke-width="1"/>
<line x1="650.40" y1="274.92" x2="700.90" y2="274.92" stroke="#d8f4ff" stroke-width="0.9"/>
<line x1="649.40" y1="298.08" x2="701.90" y2="298.08" stroke="#1c1c1c" stroke-width="1"/>
<line x1="650.40" y1="287.00" x2="700.90" y2="287.00" stroke="#d8f4ff" stroke-width="0.9"/>
<line x1="649.40" y1="310.16" x2="701.90" y2="310.16" stroke="#1c1c1c" stroke-width="1"/>
<line x1="650.40" y1="299.08" x2="700.90" y2="299.08" stroke="#d8f4ff" stroke-width="0.9"/>
<line x1="649.40" y1="322.24" x2="701.90" y2="322.24" stroke="#1c1c1c" stroke-width="1"/>
<line x1="650.40" y1="311.16" x2="700.90" y2="311.16" stroke="#d8f4ff" stroke-width="0.9"/>
<line x1="649.40" y1="334.32" x2="701.90" y2="334.32" stroke="#1c1c1c" stroke-width="1"/>
<line x1="650.40" y1="323.24" x2="700.90" y2="323.24" stroke="#d8f4ff" stroke-width="0.9"/>
<line x1="649.40" y1="346.40" x2="701.90" y2="346.40" stroke="#1c1c1c" stroke-width="1"/>
<line x1="650.40" y1="335.32" x2="700.90" y2="335.32" stroke="#d8f4ff" stroke-width="0.9"/>
<line x1="649.40" y1="358.48" x2="701.90" y2="358.48" stroke="#1c1c1c" stroke-width="1"/>
<line x1="650.40" y1="347.40" x2="700.90" y2="347.40" stroke="#d8f4ff" stroke-width="0.9"/>
<line x1="649.40" y1="370.56" x2="701.90" y2="370.56" stroke="#1c1c1c" stroke-width="1"/>
<line x1="650.40" y1="359.48" x2="700.90" y2="359.48" stroke="#d8f4ff" stroke-width="0.9"/>
<line x1="649.40" y1="382.64" x2="701.90" y2="382.64" stroke="#1c1c1c" stroke-width="1"/>
<line x1="650.40" y1="371.56" x2="700.90" y2="371.56" stroke="#d8f4ff" stroke-width="0.9"/>
<line x1="649.40" y1="394.72" x2="701.90" y2="394.72" stroke="#1c1c1c" stroke-width="1"/>
<line x1="650.40" y1="383.64" x2="700.90" y2="383.64" stroke="#d8f4ff" stroke-width="0.9"/>
<line x1="649.40" y1="406.80" x2="701.90" y2="406.80" stroke="#1c1c1c" stroke-width="1"/>
<line x1="650.40" y1="395.72" x2="700.90" y2="395.72" stroke="#d8f4ff" stroke-width="0.9"/>
<line x1="649.40" y1="418.88" x2="701.90" y2="418.88" stroke="#1c1c1c" stroke-width="1"/>
<line x1="650.40" y1="407.80" x2="700.90" y2="407.80" stroke="#d8f4ff" stroke-width="0.9"/>
<line x1="649.40" y1="430.96" x2="701.90" y2="430.96" stroke="#1c1c1c" stroke-width="1"/>
<line x1="650.40" y1="419.88" x2="700.90" y2="419.88" stroke="#d8f4ff" stroke-width="0.9"/>
<line x1="649.40" y1="443.04" x2="701.90" y2="443.04" stroke="#1c1c1c" stroke-width="1"/>
<line x1="650.40" y1="431.96" x2="700.90" y2="431.96" stroke="#d8f4ff" stroke-width="0.9"/>
<line x1="649.40" y1="455.12" x2="701.90" y2="455.12" stroke="#1c1c1c" stroke-width="1"/>
<line x1="650.40" y1="444.04" x2="700.90" y2="444.04" stroke="#d8f4ff" stroke-width="0.9"/>
<line x1="649.40" y1="467.20" x2="701.90" y2="467.20" stroke="#1c1c1c" stroke-width="1"/>
<line x1="650.40" y1="456.12" x2="700.90" y2="456.12" stroke="#d8f4ff" stroke-width="0.9"/>
<line x1="649.40" y1="479.28" x2="701.90" y2="479.28" stroke="#1c1c1c" stroke-width="1"/>
<line x1="650.40" y1="468.20" x2="700.90" y2="468.20" stroke="#d8f4ff" stroke-width="0.9"/>
<line x1="649.40" y1="491.36" x2="701.90" y2="491.36" stroke="#1c1c1c" stroke-width="1"/>
<line x1="650.40" y1="480.28" x2="700.90" y2="480.28" stroke="#d8f4ff" stroke-width="0.9"/>
<line x1="649.40" y1="503.44" x2="701.90" y2="503.44" stroke="#1c1c1c" stroke-width="1"/>
<line x1="650.40" y1="492.36" x2="700.90" y2="492.36" stroke="#d8f4ff" stroke-width="0.9"/>
<line x1="649.40" y1="515.52" x2="701.90" y2="515.52" stroke="#1c1c1c" stroke-width="1"/>
<line x1="650.40" y1="504.44" x2="700.90" y2="504.44" stroke="#d8f4ff" stroke-width="0.9"/>
<line x1="649.40" y1="527.60" x2="701.90" y2="527.60" stroke="#1c1c1c" stroke-width="1"/>
<line x1="650.40" y1="516.52" x2="700.90" y2="516.52" stroke="#d8f4ff" stroke-width="0.9"/>
<line x1="649.40" y1="539.68" x2="701.90" y2="539.68" stroke="#1c1c1c" stroke-width="1"/>
<line x1="650.40" y1="528.60" x2="700.90" y2="528.60" stroke="#d8f4ff" stroke-width="0.9"/>
<line x1="649.40" y1="551.76" x2="701.90" y2="551.76" stroke="#1c1c1c" stroke-width="1"/>
<line x1="650.40" y1="540.68" x2="700.90" y2="540.68" stroke="#d8f4ff" stroke-width="0.9"/>
<line x1="649.40" y1="563.84" x2="701.90" y2="563.84" stroke="#1c1c1c" stroke-width="1"/>
<line x1="650.40" y1="552.76" x2="700.90" y2="552.76" stroke="#d8f4ff" stroke-width="0.9"/>
<line x1="649.40" y1="575.92" x2="701.90" y2="575.92" stroke="#1c1c1c" stroke-width="1"/>
<line x1="650.40" y1="564.84" x2="700.90" y2="564.84" stroke="#d8f4ff" stroke-width="0.9"/>
<line x1="649.40" y1="588.00" x2="701.90" y2="588.00" stroke="#1c1c1c" stroke-width="1"/>
<line x1="650.40" y1="576.92" x2="700.90" y2="576.92" stroke="#d8f4ff" stroke-width="0.9"/>
<line x1="649.40" y1="600.08" x2="701.90" y2="600.08" stroke="#1c1c1c" stroke-width="1"/>
<line x1="650.40" y1="589.00" x2="700.90" y2="589.00" stroke="#d8f4ff" stroke-width="0.9"/>
<line x1="649.40" y1="612.16" x2="701.90" y2="612.16" stroke="#1c1c1c" stroke-width="1"/>
<line x1="650.40" y1="601.08" x2="700.90" y2="601.08" stroke="#d8f4ff" stroke-width="0.9"/>
<line x1="649.40" y1="624.24" x2="701.90" y2="624.24" stroke="#1c1c1c" stroke-width="1"/>
<line x1="650.40" y1="613.16" x2="700.90" y2="613.16" stroke="#d8f4ff" stroke-width="0.9"/>
<line x1="649.40" y1="636.32" x2="701.90" y2="636.32" stroke="#1c1c1c" stroke-width="1"/>
<line x1="650.40" y1="625.24" x2="700.90" y2="625.24" stroke="#d8f4ff" stroke-width="0.9"/>
<line x1="649.40" y1="648.40" x2="701.90" y2="648.40" stroke="#1c1c1c" stroke-width="1"/>
<line x1="650.40" y1="637.32" x2="700.90" y2="637.32" stroke="#d8f4ff" stroke-width="0.9"/>
<line x1="649.40" y1="660.48" x2="701.90" y2="660.48" stroke="#1c1c1c" stroke-width="1"/>
<line x1="649.40" y1="672.56" x2="701.90" y2="672.56" stroke="#1c1c1c" stroke-width="1"/>
<line x1="649.40" y1="684.64" x2="701.90" y2="684.64" stroke="#1c1c1c" stroke-width="1"/>
<line x1="701.90" y1="165.20" x2="701.90" y2="675.00" stroke="#1c1c1c" stroke-width="1"/>
<text transform="translate(675.65,28.82) scale(0.94,1)" text-anchor="middle" font-size="8.7" fill="#1a1a1a" xml:space="preserve">Store Pt Type</text>
<text transform="translate(728.30,28.82) scale(0.94,1)" text-anchor="middle" font-size="8.7" fill="#1a1a1a" xml:space="preserve">Pt Num</text>
<text transform="translate(781.15,28.82) scale(0.94,1)" text-anchor="middle" font-size="8.7" fill="#1a1a1a" xml:space="preserve">North</text>
<text transform="translate(834.10,28.82) scale(0.94,1)" text-anchor="middle" font-size="8.7" fill="#1a1a1a" xml:space="preserve">East</text>
<text transform="translate(887.10,28.82) scale(0.94,1)" text-anchor="middle" font-size="8.7" fill="#1a1a1a" xml:space="preserve">Elev</text>
<text transform="translate(940.05,28.82) scale(0.94,1)" text-anchor="middle" font-size="8.7" fill="#1a1a1a" xml:space="preserve">Desc</text>
<text transform="translate(675.65,41.80) scale(0.94,1)" text-anchor="middle" font-size="8.7" fill="#1a1a1a" xml:space="preserve">SP</text>
<text transform="translate(750.40,41.80) scale(0.94,1)" text-anchor="end" font-size="8.7" fill="#1a1a1a" xml:space="preserve">5003</text>
<text transform="translate(803.30,41.80) scale(0.94,1)" text-anchor="end" font-size="8.7" fill="#1a1a1a" xml:space="preserve">10400.114</text>
<text transform="translate(856.30,41.80) scale(0.94,1)" text-anchor="end" font-size="8.7" fill="#1a1a1a" xml:space="preserve">10802.118</text>
<text transform="translate(909.30,41.80) scale(0.94,1)" text-anchor="end" font-size="8.7" fill="#1a1a1a" xml:space="preserve">834.485</text>
<text transform="translate(962.20,41.80) scale(0.94,1)" text-anchor="end" font-size="8.7" fill="#1a1a1a" xml:space="preserve">SETHT</text>
<text transform="translate(675.65,53.88) scale(0.94,1)" text-anchor="middle" font-size="8.7" fill="#1a1a1a" xml:space="preserve">Station</text>
<text transform="translate(728.30,53.88) scale(0.94,1)" text-anchor="middle" font-size="8.7" fill="#1a1a1a" xml:space="preserve">BS Pt</text>
<text transform="translate(781.15,53.88) scale(0.94,1)" text-anchor="middle" font-size="8.7" fill="#1a1a1a" xml:space="preserve">BS Brg</text>
<text transform="translate(834.10,53.88) scale(0.94,1)" text-anchor="middle" font-size="8.7" fill="#1a1a1a" xml:space="preserve">BS Read</text>
<text transform="translate(887.10,53.88) scale(0.94,1)" text-anchor="middle" font-size="8.7" fill="#1a1a1a" xml:space="preserve">Inst Ht</text>
<text transform="translate(697.60,65.96) scale(0.94,1)" text-anchor="end" font-size="8.7" fill="#1a1a1a" xml:space="preserve">10</text>
<text transform="translate(750.40,65.96) scale(0.94,1)" text-anchor="end" font-size="8.7" fill="#1a1a1a" xml:space="preserve">5003</text>
<text transform="translate(856.30,65.96) scale(0.94,1)" text-anchor="end" font-size="8.7" fill="#1a1a1a" xml:space="preserve">0°00'00"</text>
<text transform="translate(909.30,65.96) scale(0.94,1)" text-anchor="end" font-size="8.7" fill="#1a1a1a" xml:space="preserve">0.00</text>
<text transform="translate(675.65,78.04) scale(0.94,1)" text-anchor="middle" font-size="8.7" fill="#1a1a1a" xml:space="preserve">Note</text>
<text transform="translate(705.40,78.04) scale(0.94,1)" text-anchor="start" font-size="8.7" fill="#1a1a1a" xml:space="preserve">--Occupy Notes</text>
<text transform="translate(675.65,90.12) scale(0.94,1)" text-anchor="middle" font-size="8.7" fill="#1a1a1a" xml:space="preserve">Note</text>
<text transform="translate(705.40,90.12) scale(0.94,1)" text-anchor="start" font-size="8.7" fill="#1a1a1a" xml:space="preserve">--  Observed Values:</text>
<text transform="translate(794.50,90.12) scale(0.94,1)" font-size="8.7" fill="#1a1a1a" xml:space="preserve" textLength="236.5" lengthAdjust="spacingAndGlyphs">HA 0°00'00.0&quot; VA 89°08'09.0&quot; SD 397.02' HD 396.97' HR 0.00'</text>
<text transform="translate(675.65,102.20) scale(0.94,1)" text-anchor="middle" font-size="8.7" fill="#1a1a1a" xml:space="preserve">Note</text>
<text transform="translate(705.40,102.20) scale(0.94,1)" text-anchor="start" font-size="8.7" fill="#1a1a1a" xml:space="preserve">--  Observed Reference:</text>
<text transform="translate(800.00,102.20) scale(0.94,1)" font-size="8.7" fill="#1a1a1a" xml:space="preserve">Point</text>
<text transform="translate(675.65,114.28) scale(0.94,1)" text-anchor="middle" font-size="8.7" fill="#1a1a1a" xml:space="preserve">Note</text>
<text transform="translate(705.40,114.28) scale(0.94,1)" text-anchor="start" font-size="8.7" fill="#1a1a1a" xml:space="preserve">--  Distance Calculated:</text>
<text transform="translate(792.60,114.28) scale(0.94,1)" font-size="8.7" fill="#1a1a1a" xml:space="preserve">396.85'</text>
<text transform="translate(675.65,126.36) scale(0.94,1)" text-anchor="middle" font-size="8.7" fill="#1a1a1a" xml:space="preserve">Note</text>
<text transform="translate(705.40,126.36) scale(0.94,1)" text-anchor="start" font-size="8.7" fill="#1a1a1a" xml:space="preserve">--  Distance Error:</text>
<text transform="translate(783.70,126.36) scale(0.94,1)" font-size="8.7" fill="#1a1a1a" xml:space="preserve">0.13'</text>
<text transform="translate(675.65,138.44) scale(0.94,1)" text-anchor="middle" font-size="8.7" fill="#1a1a1a" xml:space="preserve">Note</text>
<text transform="translate(705.40,138.44) scale(0.94,1)" text-anchor="start" font-size="8.7" fill="#1a1a1a" xml:space="preserve">--  BS Elevation:</text>
<text transform="translate(781.50,138.44) scale(0.94,1)" font-size="8.7" fill="#1a1a1a" xml:space="preserve">834.48'</text>
<text transform="translate(675.65,150.52) scale(0.94,1)" text-anchor="middle" font-size="8.7" fill="#1a1a1a" xml:space="preserve">Note</text>
<text transform="translate(705.40,150.52) scale(0.94,1)" text-anchor="start" font-size="8.7" fill="#1a1a1a" xml:space="preserve">--  BS Elevation Error:</text>
<text transform="translate(788.00,150.52) scale(0.94,1)" font-size="8.7" fill="#1a1a1a" xml:space="preserve">-0.46'</text>
<text transform="translate(675.65,162.60) scale(0.94,1)" text-anchor="middle" font-size="8.7" fill="#1a1a1a" xml:space="preserve">Shot Type</text>
<text transform="translate(728.30,162.60) scale(0.94,1)" text-anchor="middle" font-size="8.7" fill="#1a1a1a" xml:space="preserve">Shot Pt</text>
<text transform="translate(781.15,162.60) scale(0.94,1)" text-anchor="middle" font-size="8.7" fill="#1a1a1a" xml:space="preserve">Targ Ht</text>
<text transform="translate(834.10,162.60) scale(0.94,1)" text-anchor="middle" font-size="8.7" fill="#1a1a1a" xml:space="preserve">Hz Ang</text>
<text transform="translate(887.10,162.60) scale(0.94,1)" text-anchor="middle" font-size="8.7" fill="#1a1a1a" xml:space="preserve">Vt Ang</text>
<text transform="translate(940.05,162.60) scale(0.94,1)" text-anchor="middle" font-size="8.7" fill="#1a1a1a" xml:space="preserve">Slp Dist</text>
<text transform="translate(992.90,162.60) scale(0.94,1)" text-anchor="middle" font-size="8.7" fill="#1a1a1a" xml:space="preserve">Desc</text>
<text transform="translate(675.65,174.68) scale(0.94,1)" text-anchor="middle" font-size="8.7" fill="#d4f0ff" xml:space="preserve">SS</text>
<text transform="translate(750.40,174.68) scale(0.94,1)" text-anchor="end" font-size="8.7" fill="#d4f0ff" xml:space="preserve">6764</text>
<text transform="translate(803.30,174.68) scale(0.94,1)" text-anchor="end" font-size="8.7" fill="#d4f0ff" xml:space="preserve">0.00</text>
<text transform="translate(856.30,174.68) scale(0.94,1)" text-anchor="end" font-size="8.7" fill="#d4f0ff" xml:space="preserve">14°09'50&quot;</text>
<text transform="translate(909.30,174.68) scale(0.94,1)" text-anchor="end" font-size="8.7" fill="#d4f0ff" xml:space="preserve">92°08'17&quot;</text>
<text transform="translate(962.20,174.68) scale(0.94,1)" text-anchor="end" font-size="8.7" fill="#d4f0ff" xml:space="preserve">74.20</text>
<text transform="translate(1015.00,174.68) scale(0.94,1)" text-anchor="end" font-size="8.7" fill="#d4f0ff" xml:space="preserve">SIDEWALK</text>
<text transform="translate(675.65,186.76) scale(0.94,1)" text-anchor="middle" font-size="8.7" fill="#d4f0ff" xml:space="preserve">SS</text>
<text transform="translate(750.40,186.76) scale(0.94,1)" text-anchor="end" font-size="8.7" fill="#d4f0ff" xml:space="preserve">6765</text>
<text transform="translate(803.30,186.76) scale(0.94,1)" text-anchor="end" font-size="8.7" fill="#d4f0ff" xml:space="preserve">0.00</text>
<text transform="translate(856.30,186.76) scale(0.94,1)" text-anchor="end" font-size="8.7" fill="#d4f0ff" xml:space="preserve">54°24'53&quot;</text>
<text transform="translate(909.30,186.76) scale(0.94,1)" text-anchor="end" font-size="8.7" fill="#d4f0ff" xml:space="preserve">87°39'45&quot;</text>
<text transform="translate(962.20,186.76) scale(0.94,1)" text-anchor="end" font-size="8.7" fill="#d4f0ff" xml:space="preserve">89.39</text>
<text transform="translate(1015.00,186.76) scale(0.94,1)" text-anchor="end" font-size="8.7" fill="#d4f0ff" xml:space="preserve">SIDEWALK</text>
<text transform="translate(675.65,198.84) scale(0.94,1)" text-anchor="middle" font-size="8.7" fill="#d4f0ff" xml:space="preserve">SS</text>
<text transform="translate(750.40,198.84) scale(0.94,1)" text-anchor="end" font-size="8.7" fill="#d4f0ff" xml:space="preserve">6766</text>
<text transform="translate(803.30,198.84) scale(0.94,1)" text-anchor="end" font-size="8.7" fill="#d4f0ff" xml:space="preserve">0.00</text>
<text transform="translate(856.30,198.84) scale(0.94,1)" text-anchor="end" font-size="8.7" fill="#d4f0ff" xml:space="preserve">61°24'05&quot;</text>
<text transform="translate(909.30,198.84) scale(0.94,1)" text-anchor="end" font-size="8.7" fill="#d4f0ff" xml:space="preserve">87°35'35&quot;</text>
<text transform="translate(962.20,198.84) scale(0.94,1)" text-anchor="end" font-size="8.7" fill="#d4f0ff" xml:space="preserve">101.26</text>
<text transform="translate(1015.00,198.84) scale(0.94,1)" text-anchor="end" font-size="8.7" fill="#d4f0ff" xml:space="preserve">SIDEWALK</text>
<text transform="translate(675.65,210.92) scale(0.94,1)" text-anchor="middle" font-size="8.7" fill="#d4f0ff" xml:space="preserve">SS</text>
<text transform="translate(750.40,210.92) scale(0.94,1)" text-anchor="end" font-size="8.7" fill="#d4f0ff" xml:space="preserve">6767</text>
<text transform="translate(803.30,210.92) scale(0.94,1)" text-anchor="end" font-size="8.7" fill="#d4f0ff" xml:space="preserve">0.00</text>
<text transform="translate(856.30,210.92) scale(0.94,1)" text-anchor="end" font-size="8.7" fill="#d4f0ff" xml:space="preserve">64°14'40&quot;</text>
<text transform="translate(909.30,210.92) scale(0.94,1)" text-anchor="end" font-size="8.7" fill="#d4f0ff" xml:space="preserve">87°40'13&quot;</text>
<text transform="translate(962.20,210.92) scale(0.94,1)" text-anchor="end" font-size="8.7" fill="#d4f0ff" xml:space="preserve">113.87</text>
<text transform="translate(1015.00,210.92) scale(0.94,1)" text-anchor="end" font-size="8.7" fill="#d4f0ff" xml:space="preserve">SIDEWALK</text>
<text transform="translate(675.65,223.00) scale(0.94,1)" text-anchor="middle" font-size="8.7" fill="#d4f0ff" xml:space="preserve">SS</text>
<text transform="translate(750.40,223.00) scale(0.94,1)" text-anchor="end" font-size="8.7" fill="#d4f0ff" xml:space="preserve">6768</text>
<text transform="translate(803.30,223.00) scale(0.94,1)" text-anchor="end" font-size="8.7" fill="#d4f0ff" xml:space="preserve">0.00</text>
<text transform="translate(856.30,223.00) scale(0.94,1)" text-anchor="end" font-size="8.7" fill="#d4f0ff" xml:space="preserve">68°42'39&quot;</text>
<text transform="translate(909.30,223.00) scale(0.94,1)" text-anchor="end" font-size="8.7" fill="#d4f0ff" xml:space="preserve">87°36'18&quot;</text>
<text transform="translate(962.20,223.00) scale(0.94,1)" text-anchor="end" font-size="8.7" fill="#d4f0ff" xml:space="preserve">111.72</text>
<text transform="translate(1015.00,223.00) scale(0.94,1)" text-anchor="end" font-size="8.7" fill="#d4f0ff" xml:space="preserve">SIDEWALK</text>
<text transform="translate(675.65,235.08) scale(0.94,1)" text-anchor="middle" font-size="8.7" fill="#d4f0ff" xml:space="preserve">SS</text>
<text transform="translate(750.40,235.08) scale(0.94,1)" text-anchor="end" font-size="8.7" fill="#d4f0ff" xml:space="preserve">6769</text>
<text transform="translate(803.30,235.08) scale(0.94,1)" text-anchor="end" font-size="8.7" fill="#d4f0ff" xml:space="preserve">0.00</text>
<text transform="translate(856.30,235.08) scale(0.94,1)" text-anchor="end" font-size="8.7" fill="#d4f0ff" xml:space="preserve">69°13'34&quot;</text>
<text transform="translate(909.30,235.08) scale(0.94,1)" text-anchor="end" font-size="8.7" fill="#d4f0ff" xml:space="preserve">87°40'15&quot;</text>
<text transform="translate(962.20,235.08) scale(0.94,1)" text-anchor="end" font-size="8.7" fill="#d4f0ff" xml:space="preserve">116.63</text>
<text transform="translate(1015.00,235.08) scale(0.94,1)" text-anchor="end" font-size="8.7" fill="#d4f0ff" xml:space="preserve">SIDEWALK</text>
<text transform="translate(675.65,247.16) scale(0.94,1)" text-anchor="middle" font-size="8.7" fill="#d4f0ff" xml:space="preserve">SS</text>
<text transform="translate(750.40,247.16) scale(0.94,1)" text-anchor="end" font-size="8.7" fill="#d4f0ff" xml:space="preserve">6770</text>
<text transform="translate(803.30,247.16) scale(0.94,1)" text-anchor="end" font-size="8.7" fill="#d4f0ff" xml:space="preserve">0.00</text>
<text transform="translate(856.30,247.16) scale(0.94,1)" text-anchor="end" font-size="8.7" fill="#d4f0ff" xml:space="preserve">71°33'26&quot;</text>
<text transform="translate(909.30,247.16) scale(0.94,1)" text-anchor="end" font-size="8.7" fill="#d4f0ff" xml:space="preserve">87°40'17&quot;</text>
<text transform="translate(962.20,247.16) scale(0.94,1)" text-anchor="end" font-size="8.7" fill="#d4f0ff" xml:space="preserve">115.98</text>
<text transform="translate(1015.00,247.16) scale(0.94,1)" text-anchor="end" font-size="8.7" fill="#d4f0ff" xml:space="preserve">SIDEWALK</text>
<text transform="translate(675.65,259.24) scale(0.94,1)" text-anchor="middle" font-size="8.7" fill="#d4f0ff" xml:space="preserve">SS</text>
<text transform="translate(750.40,259.24) scale(0.94,1)" text-anchor="end" font-size="8.7" fill="#d4f0ff" xml:space="preserve">6771</text>
<text transform="translate(803.30,259.24) scale(0.94,1)" text-anchor="end" font-size="8.7" fill="#d4f0ff" xml:space="preserve">0.00</text>
<text transform="translate(856.30,259.24) scale(0.94,1)" text-anchor="end" font-size="8.7" fill="#d4f0ff" xml:space="preserve">76°12'03&quot;</text>
<text transform="translate(909.30,259.24) scale(0.94,1)" text-anchor="end" font-size="8.7" fill="#d4f0ff" xml:space="preserve">87°45'33&quot;</text>
<text transform="translate(962.20,259.24) scale(0.94,1)" text-anchor="end" font-size="8.7" fill="#d4f0ff" xml:space="preserve">117.35</text>
<text transform="translate(1015.00,259.24) scale(0.94,1)" text-anchor="end" font-size="8.7" fill="#d4f0ff" xml:space="preserve">SIDEWALK</text>
<text transform="translate(675.65,271.32) scale(0.94,1)" text-anchor="middle" font-size="8.7" fill="#d4f0ff" xml:space="preserve">SS</text>
<text transform="translate(750.40,271.32) scale(0.94,1)" text-anchor="end" font-size="8.7" fill="#d4f0ff" xml:space="preserve">6772</text>
<text transform="translate(803.30,271.32) scale(0.94,1)" text-anchor="end" font-size="8.7" fill="#d4f0ff" xml:space="preserve">0.00</text>
<text transform="translate(856.30,271.32) scale(0.94,1)" text-anchor="end" font-size="8.7" fill="#d4f0ff" xml:space="preserve">79°34'36&quot;</text>
<text transform="translate(909.30,271.32) scale(0.94,1)" text-anchor="end" font-size="8.7" fill="#d4f0ff" xml:space="preserve">87°53'44&quot;</text>
<text transform="translate(962.20,271.32) scale(0.94,1)" text-anchor="end" font-size="8.7" fill="#d4f0ff" xml:space="preserve">124.12</text>
<text transform="translate(1015.00,271.32) scale(0.94,1)" text-anchor="end" font-size="8.7" fill="#d4f0ff" xml:space="preserve">SIDEWALK</text>
<text transform="translate(675.65,283.40) scale(0.94,1)" text-anchor="middle" font-size="8.7" fill="#d4f0ff" xml:space="preserve">SS</text>
<text transform="translate(750.40,283.40) scale(0.94,1)" text-anchor="end" font-size="8.7" fill="#d4f0ff" xml:space="preserve">6773</text>
<text transform="translate(803.30,283.40) scale(0.94,1)" text-anchor="end" font-size="8.7" fill="#d4f0ff" xml:space="preserve">0.00</text>
<text transform="translate(856.30,283.40) scale(0.94,1)" text-anchor="end" font-size="8.7" fill="#d4f0ff" xml:space="preserve">80°42'39&quot;</text>
<text transform="translate(909.30,283.40) scale(0.94,1)" text-anchor="end" font-size="8.7" fill="#d4f0ff" xml:space="preserve">87°55'11&quot;</text>
<text transform="translate(962.20,283.40) scale(0.94,1)" text-anchor="end" font-size="8.7" fill="#d4f0ff" xml:space="preserve">131.15</text>
<text transform="translate(1015.00,283.40) scale(0.94,1)" text-anchor="end" font-size="8.7" fill="#d4f0ff" xml:space="preserve">SIDEWALK</text>
<text transform="translate(675.65,295.48) scale(0.94,1)" text-anchor="middle" font-size="8.7" fill="#d4f0ff" xml:space="preserve">SS</text>
<text transform="translate(750.40,295.48) scale(0.94,1)" text-anchor="end" font-size="8.7" fill="#d4f0ff" xml:space="preserve">6774</text>
<text transform="translate(803.30,295.48) scale(0.94,1)" text-anchor="end" font-size="8.7" fill="#d4f0ff" xml:space="preserve">0.00</text>
<text transform="translate(856.30,295.48) scale(0.94,1)" text-anchor="end" font-size="8.7" fill="#d4f0ff" xml:space="preserve">80°50'22&quot;</text>
<text transform="translate(909.30,295.48) scale(0.94,1)" text-anchor="end" font-size="8.7" fill="#d4f0ff" xml:space="preserve">87°56'59&quot;</text>
<text transform="translate(962.20,295.48) scale(0.94,1)" text-anchor="end" font-size="8.7" fill="#d4f0ff" xml:space="preserve">135.80</text>
<text transform="translate(1015.00,295.48) scale(0.94,1)" text-anchor="end" font-size="8.7" fill="#d4f0ff" xml:space="preserve">SIDEWALK</text>
<text transform="translate(675.65,307.56) scale(0.94,1)" text-anchor="middle" font-size="8.7" fill="#d4f0ff" xml:space="preserve">SS</text>
<text transform="translate(750.40,307.56) scale(0.94,1)" text-anchor="end" font-size="8.7" fill="#d4f0ff" xml:space="preserve">6775</text>
<text transform="translate(803.30,307.56) scale(0.94,1)" text-anchor="end" font-size="8.7" fill="#d4f0ff" xml:space="preserve">0.00</text>
<text transform="translate(856.30,307.56) scale(0.94,1)" text-anchor="end" font-size="8.7" fill="#d4f0ff" xml:space="preserve">80°41'42&quot;</text>
<text transform="translate(909.30,307.56) scale(0.94,1)" text-anchor="end" font-size="8.7" fill="#d4f0ff" xml:space="preserve">88°01'37&quot;</text>
<text transform="translate(962.20,307.56) scale(0.94,1)" text-anchor="end" font-size="8.7" fill="#d4f0ff" xml:space="preserve">148.21</text>
<text transform="translate(1015.00,307.56) scale(0.94,1)" text-anchor="end" font-size="8.7" fill="#d4f0ff" xml:space="preserve">SIDEWALK</text>
<text transform="translate(675.65,319.64) scale(0.94,1)" text-anchor="middle" font-size="8.7" fill="#d4f0ff" xml:space="preserve">SS</text>
<text transform="translate(750.40,319.64) scale(0.94,1)" text-anchor="end" font-size="8.7" fill="#d4f0ff" xml:space="preserve">6776</text>
<text transform="translate(803.30,319.64) scale(0.94,1)" text-anchor="end" font-size="8.7" fill="#d4f0ff" xml:space="preserve">0.00</text>
<text transform="translate(856.30,319.64) scale(0.94,1)" text-anchor="end" font-size="8.7" fill="#d4f0ff" xml:space="preserve">78°43'32&quot;</text>
<text transform="translate(909.30,319.64) scale(0.94,1)" text-anchor="end" font-size="8.7" fill="#d4f0ff" xml:space="preserve">88°01'39&quot;</text>
<text transform="translate(962.20,319.64) scale(0.94,1)" text-anchor="end" font-size="8.7" fill="#d4f0ff" xml:space="preserve">148.24</text>
<text transform="translate(1015.00,319.64) scale(0.94,1)" text-anchor="end" font-size="8.7" fill="#d4f0ff" xml:space="preserve">SIDEWALK</text>
<text transform="translate(675.65,331.72) scale(0.94,1)" text-anchor="middle" font-size="8.7" fill="#d4f0ff" xml:space="preserve">SS</text>
<text transform="translate(750.40,331.72) scale(0.94,1)" text-anchor="end" font-size="8.7" fill="#d4f0ff" xml:space="preserve">6777</text>
<text transform="translate(803.30,331.72) scale(0.94,1)" text-anchor="end" font-size="8.7" fill="#d4f0ff" xml:space="preserve">0.00</text>
<text transform="translate(856.30,331.72) scale(0.94,1)" text-anchor="end" font-size="8.7" fill="#d4f0ff" xml:space="preserve">78°35'19&quot;</text>
<text transform="translate(909.30,331.72) scale(0.94,1)" text-anchor="end" font-size="8.7" fill="#d4f0ff" xml:space="preserve">87°56'25&quot;</text>
<text transform="translate(962.20,331.72) scale(0.94,1)" text-anchor="end" font-size="8.7" fill="#d4f0ff" xml:space="preserve">135.68</text>
<text transform="translate(1015.00,331.72) scale(0.94,1)" text-anchor="end" font-size="8.7" fill="#d4f0ff" xml:space="preserve">SIDEWALK</text>
<text transform="translate(675.65,343.80) scale(0.94,1)" text-anchor="middle" font-size="8.7" fill="#d4f0ff" xml:space="preserve">SS</text>
<text transform="translate(750.40,343.80) scale(0.94,1)" text-anchor="end" font-size="8.7" fill="#d4f0ff" xml:space="preserve">6778</text>
<text transform="translate(803.30,343.80) scale(0.94,1)" text-anchor="end" font-size="8.7" fill="#d4f0ff" xml:space="preserve">0.00</text>
<text transform="translate(856.30,343.80) scale(0.94,1)" text-anchor="end" font-size="8.7" fill="#d4f0ff" xml:space="preserve">77°34'50&quot;</text>
<text transform="translate(909.30,343.80) scale(0.94,1)" text-anchor="end" font-size="8.7" fill="#d4f0ff" xml:space="preserve">87°53'14&quot;</text>
<text transform="translate(962.20,343.80) scale(0.94,1)" text-anchor="end" font-size="8.7" fill="#d4f0ff" xml:space="preserve">126.57</text>
<text transform="translate(1015.00,343.80) scale(0.94,1)" text-anchor="end" font-size="8.7" fill="#d4f0ff" xml:space="preserve">SIDEWALK</text>
<text transform="translate(675.65,355.88) scale(0.94,1)" text-anchor="middle" font-size="8.7" fill="#d4f0ff" xml:space="preserve">SS</text>
<text transform="translate(750.40,355.88) scale(0.94,1)" text-anchor="end" font-size="8.7" fill="#d4f0ff" xml:space="preserve">6779</text>
<text transform="translate(803.30,355.88) scale(0.94,1)" text-anchor="end" font-size="8.7" fill="#d4f0ff" xml:space="preserve">0.00</text>
<text transform="translate(856.30,355.88) scale(0.94,1)" text-anchor="end" font-size="8.7" fill="#d4f0ff" xml:space="preserve">75°12'32&quot;</text>
<text transform="translate(909.30,355.88) scale(0.94,1)" text-anchor="end" font-size="8.7" fill="#d4f0ff" xml:space="preserve">87°48'01&quot;</text>
<text transform="translate(962.20,355.88) scale(0.94,1)" text-anchor="end" font-size="8.7" fill="#d4f0ff" xml:space="preserve">121.75</text>
<text transform="translate(1015.00,355.88) scale(0.94,1)" text-anchor="end" font-size="8.7" fill="#d4f0ff" xml:space="preserve">SIDEWALK</text>
<text transform="translate(675.65,367.96) scale(0.94,1)" text-anchor="middle" font-size="8.7" fill="#d4f0ff" xml:space="preserve">SS</text>
<text transform="translate(750.40,367.96) scale(0.94,1)" text-anchor="end" font-size="8.7" fill="#d4f0ff" xml:space="preserve">6780</text>
<text transform="translate(803.30,367.96) scale(0.94,1)" text-anchor="end" font-size="8.7" fill="#d4f0ff" xml:space="preserve">0.00</text>
<text transform="translate(856.30,367.96) scale(0.94,1)" text-anchor="end" font-size="8.7" fill="#d4f0ff" xml:space="preserve">72°07'36&quot;</text>
<text transform="translate(909.30,367.96) scale(0.94,1)" text-anchor="end" font-size="8.7" fill="#d4f0ff" xml:space="preserve">87°43'57&quot;</text>
<text transform="translate(962.20,367.96) scale(0.94,1)" text-anchor="end" font-size="8.7" fill="#d4f0ff" xml:space="preserve">120.87</text>
<text transform="translate(1015.00,367.96) scale(0.94,1)" text-anchor="end" font-size="8.7" fill="#d4f0ff" xml:space="preserve">SIDEWALK</text>
<text transform="translate(675.65,380.04) scale(0.94,1)" text-anchor="middle" font-size="8.7" fill="#d4f0ff" xml:space="preserve">SS</text>
<text transform="translate(750.40,380.04) scale(0.94,1)" text-anchor="end" font-size="8.7" fill="#d4f0ff" xml:space="preserve">6781</text>
<text transform="translate(803.30,380.04) scale(0.94,1)" text-anchor="end" font-size="8.7" fill="#d4f0ff" xml:space="preserve">0.00</text>
<text transform="translate(856.30,380.04) scale(0.94,1)" text-anchor="end" font-size="8.7" fill="#d4f0ff" xml:space="preserve">69°40'54&quot;</text>
<text transform="translate(909.30,380.04) scale(0.94,1)" text-anchor="end" font-size="8.7" fill="#d4f0ff" xml:space="preserve">87°43'59&quot;</text>
<text transform="translate(962.20,380.04) scale(0.94,1)" text-anchor="end" font-size="8.7" fill="#d4f0ff" xml:space="preserve">121.55</text>
<text transform="translate(1015.00,380.04) scale(0.94,1)" text-anchor="end" font-size="8.7" fill="#d4f0ff" xml:space="preserve">SIDEWALK</text>
<text transform="translate(675.65,392.12) scale(0.94,1)" text-anchor="middle" font-size="8.7" fill="#d4f0ff" xml:space="preserve">SS</text>
<text transform="translate(750.40,392.12) scale(0.94,1)" text-anchor="end" font-size="8.7" fill="#d4f0ff" xml:space="preserve">6782</text>
<text transform="translate(803.30,392.12) scale(0.94,1)" text-anchor="end" font-size="8.7" fill="#d4f0ff" xml:space="preserve">0.00</text>
<text transform="translate(856.30,392.12) scale(0.94,1)" text-anchor="end" font-size="8.7" fill="#d4f0ff" xml:space="preserve">70°31'03&quot;</text>
<text transform="translate(909.30,392.12) scale(0.94,1)" text-anchor="end" font-size="8.7" fill="#d4f0ff" xml:space="preserve">87°49'54&quot;</text>
<text transform="translate(962.20,392.12) scale(0.94,1)" text-anchor="end" font-size="8.7" fill="#d4f0ff" xml:space="preserve">132.48</text>
<text transform="translate(1015.00,392.12) scale(0.94,1)" text-anchor="end" font-size="8.7" fill="#d4f0ff" xml:space="preserve">SIDEWALK</text>
<text transform="translate(675.65,404.20) scale(0.94,1)" text-anchor="middle" font-size="8.7" fill="#d4f0ff" xml:space="preserve">SS</text>
<text transform="translate(750.40,404.20) scale(0.94,1)" text-anchor="end" font-size="8.7" fill="#d4f0ff" xml:space="preserve">6783</text>
<text transform="translate(803.30,404.20) scale(0.94,1)" text-anchor="end" font-size="8.7" fill="#d4f0ff" xml:space="preserve">0.00</text>
<text transform="translate(856.30,404.20) scale(0.94,1)" text-anchor="end" font-size="8.7" fill="#d4f0ff" xml:space="preserve">68°48'02&quot;</text>
<text transform="translate(909.30,404.20) scale(0.94,1)" text-anchor="end" font-size="8.7" fill="#d4f0ff" xml:space="preserve">87°48'36&quot;</text>
<text transform="translate(962.20,404.20) scale(0.94,1)" text-anchor="end" font-size="8.7" fill="#d4f0ff" xml:space="preserve">133.32</text>
<text transform="translate(1015.00,404.20) scale(0.94,1)" text-anchor="end" font-size="8.7" fill="#d4f0ff" xml:space="preserve">SIDEWALK</text>
<text transform="translate(675.65,416.28) scale(0.94,1)" text-anchor="middle" font-size="8.7" fill="#d4f0ff" xml:space="preserve">SS</text>
<text transform="translate(750.40,416.28) scale(0.94,1)" text-anchor="end" font-size="8.7" fill="#d4f0ff" xml:space="preserve">6784</text>
<text transform="translate(803.30,416.28) scale(0.94,1)" text-anchor="end" font-size="8.7" fill="#d4f0ff" xml:space="preserve">0.00</text>
<text transform="translate(856.30,416.28) scale(0.94,1)" text-anchor="end" font-size="8.7" fill="#d4f0ff" xml:space="preserve">61°15'52&quot;</text>
<text transform="translate(909.30,416.28) scale(0.94,1)" text-anchor="end" font-size="8.7" fill="#d4f0ff" xml:space="preserve">87°54'55&quot;</text>
<text transform="translate(962.20,416.28) scale(0.94,1)" text-anchor="end" font-size="8.7" fill="#d4f0ff" xml:space="preserve">142.10</text>
<text transform="translate(1015.00,416.28) scale(0.94,1)" text-anchor="end" font-size="8.7" fill="#d4f0ff" xml:space="preserve">SIDEWALK</text>
<text transform="translate(675.65,428.36) scale(0.94,1)" text-anchor="middle" font-size="8.7" fill="#d4f0ff" xml:space="preserve">SS</text>
<text transform="translate(750.40,428.36) scale(0.94,1)" text-anchor="end" font-size="8.7" fill="#d4f0ff" xml:space="preserve">6785</text>
<text transform="translate(803.30,428.36) scale(0.94,1)" text-anchor="end" font-size="8.7" fill="#d4f0ff" xml:space="preserve">0.00</text>
<text transform="translate(856.30,428.36) scale(0.94,1)" text-anchor="end" font-size="8.7" fill="#d4f0ff" xml:space="preserve">60°44'24&quot;</text>
<text transform="translate(909.30,428.36) scale(0.94,1)" text-anchor="end" font-size="8.7" fill="#d4f0ff" xml:space="preserve">87°54'56&quot;</text>
<text transform="translate(962.20,428.36) scale(0.94,1)" text-anchor="end" font-size="8.7" fill="#d4f0ff" xml:space="preserve">138.54</text>
<text transform="translate(1015.00,428.36) scale(0.94,1)" text-anchor="end" font-size="8.7" fill="#d4f0ff" xml:space="preserve">SIDEWALK</text>
<text transform="translate(675.65,440.44) scale(0.94,1)" text-anchor="middle" font-size="8.7" fill="#d4f0ff" xml:space="preserve">SS</text>
<text transform="translate(750.40,440.44) scale(0.94,1)" text-anchor="end" font-size="8.7" fill="#d4f0ff" xml:space="preserve">6786</text>
<text transform="translate(803.30,440.44) scale(0.94,1)" text-anchor="end" font-size="8.7" fill="#d4f0ff" xml:space="preserve">0.00</text>
<text transform="translate(856.30,440.44) scale(0.94,1)" text-anchor="end" font-size="8.7" fill="#d4f0ff" xml:space="preserve">59°10'20&quot;</text>
<text transform="translate(909.30,440.44) scale(0.94,1)" text-anchor="end" font-size="8.7" fill="#d4f0ff" xml:space="preserve">87°54'56&quot;</text>
<text transform="translate(962.20,440.44) scale(0.94,1)" text-anchor="end" font-size="8.7" fill="#d4f0ff" xml:space="preserve">139.89</text>
<text transform="translate(1015.00,440.44) scale(0.94,1)" text-anchor="end" font-size="8.7" fill="#d4f0ff" xml:space="preserve">SIDEWALK</text>
<text transform="translate(675.65,452.52) scale(0.94,1)" text-anchor="middle" font-size="8.7" fill="#d4f0ff" xml:space="preserve">SS</text>
<text transform="translate(750.40,452.52) scale(0.94,1)" text-anchor="end" font-size="8.7" fill="#d4f0ff" xml:space="preserve">6787</text>
<text transform="translate(803.30,452.52) scale(0.94,1)" text-anchor="end" font-size="8.7" fill="#d4f0ff" xml:space="preserve">0.00</text>
<text transform="translate(856.30,452.52) scale(0.94,1)" text-anchor="end" font-size="8.7" fill="#d4f0ff" xml:space="preserve">55°30'44&quot;</text>
<text transform="translate(909.30,452.52) scale(0.94,1)" text-anchor="end" font-size="8.7" fill="#d4f0ff" xml:space="preserve">87°47'09&quot;</text>
<text transform="translate(962.20,452.52) scale(0.94,1)" text-anchor="end" font-size="8.7" fill="#d4f0ff" xml:space="preserve">120.51</text>
<text transform="translate(1015.00,452.52) scale(0.94,1)" text-anchor="end" font-size="8.7" fill="#d4f0ff" xml:space="preserve">SIDEWALK</text>
<text transform="translate(675.65,464.60) scale(0.94,1)" text-anchor="middle" font-size="8.7" fill="#d4f0ff" xml:space="preserve">SS</text>
<text transform="translate(750.40,464.60) scale(0.94,1)" text-anchor="end" font-size="8.7" fill="#d4f0ff" xml:space="preserve">6788</text>
<text transform="translate(803.30,464.60) scale(0.94,1)" text-anchor="end" font-size="8.7" fill="#d4f0ff" xml:space="preserve">0.00</text>
<text transform="translate(856.30,464.60) scale(0.94,1)" text-anchor="end" font-size="8.7" fill="#d4f0ff" xml:space="preserve">59°30'17&quot;</text>
<text transform="translate(909.30,464.60) scale(0.94,1)" text-anchor="end" font-size="8.7" fill="#d4f0ff" xml:space="preserve">87°45'12&quot;</text>
<text transform="translate(962.20,464.60) scale(0.94,1)" text-anchor="end" font-size="8.7" fill="#d4f0ff" xml:space="preserve">117.00</text>
<text transform="translate(1015.00,464.60) scale(0.94,1)" text-anchor="end" font-size="8.7" fill="#d4f0ff" xml:space="preserve">SIDEWALK</text>
<text transform="translate(675.65,476.68) scale(0.94,1)" text-anchor="middle" font-size="8.7" fill="#d4f0ff" xml:space="preserve">SS</text>
<text transform="translate(750.40,476.68) scale(0.94,1)" text-anchor="end" font-size="8.7" fill="#d4f0ff" xml:space="preserve">6789</text>
<text transform="translate(803.30,476.68) scale(0.94,1)" text-anchor="end" font-size="8.7" fill="#d4f0ff" xml:space="preserve">0.00</text>
<text transform="translate(856.30,476.68) scale(0.94,1)" text-anchor="end" font-size="8.7" fill="#d4f0ff" xml:space="preserve">57°28'27&quot;</text>
<text transform="translate(909.30,476.68) scale(0.94,1)" text-anchor="end" font-size="8.7" fill="#d4f0ff" xml:space="preserve">87°41'53&quot;</text>
<text transform="translate(962.20,476.68) scale(0.94,1)" text-anchor="end" font-size="8.7" fill="#d4f0ff" xml:space="preserve">108.63</text>
<text transform="translate(1015.00,476.68) scale(0.94,1)" text-anchor="end" font-size="8.7" fill="#d4f0ff" xml:space="preserve">SIDEWALK</text>
<text transform="translate(675.65,488.76) scale(0.94,1)" text-anchor="middle" font-size="8.7" fill="#d4f0ff" xml:space="preserve">SS</text>
<text transform="translate(750.40,488.76) scale(0.94,1)" text-anchor="end" font-size="8.7" fill="#d4f0ff" xml:space="preserve">6790</text>
<text transform="translate(803.30,488.76) scale(0.94,1)" text-anchor="end" font-size="8.7" fill="#d4f0ff" xml:space="preserve">0.00</text>
<text transform="translate(856.30,488.76) scale(0.94,1)" text-anchor="end" font-size="8.7" fill="#d4f0ff" xml:space="preserve">54°44'50&quot;</text>
<text transform="translate(909.30,488.76) scale(0.94,1)" text-anchor="end" font-size="8.7" fill="#d4f0ff" xml:space="preserve">87°41'48&quot;</text>
<text transform="translate(962.20,488.76) scale(0.94,1)" text-anchor="end" font-size="8.7" fill="#d4f0ff" xml:space="preserve">102.55</text>
<text transform="translate(1015.00,488.76) scale(0.94,1)" text-anchor="end" font-size="8.7" fill="#d4f0ff" xml:space="preserve">SIDEWALK</text>
<text transform="translate(675.65,500.84) scale(0.94,1)" text-anchor="middle" font-size="8.7" fill="#d4f0ff" xml:space="preserve">SS</text>
<text transform="translate(750.40,500.84) scale(0.94,1)" text-anchor="end" font-size="8.7" fill="#d4f0ff" xml:space="preserve">6791</text>
<text transform="translate(803.30,500.84) scale(0.94,1)" text-anchor="end" font-size="8.7" fill="#d4f0ff" xml:space="preserve">0.00</text>
<text transform="translate(856.30,500.84) scale(0.94,1)" text-anchor="end" font-size="8.7" fill="#d4f0ff" xml:space="preserve">53°39'44&quot;</text>
<text transform="translate(909.30,500.84) scale(0.94,1)" text-anchor="end" font-size="8.7" fill="#d4f0ff" xml:space="preserve">87°41'43&quot;</text>
<text transform="translate(962.20,500.84) scale(0.94,1)" text-anchor="end" font-size="8.7" fill="#d4f0ff" xml:space="preserve">100.69</text>
<text transform="translate(1015.00,500.84) scale(0.94,1)" text-anchor="end" font-size="8.7" fill="#d4f0ff" xml:space="preserve">SIDEWALK</text>
<text transform="translate(675.65,512.92) scale(0.94,1)" text-anchor="middle" font-size="8.7" fill="#d4f0ff" xml:space="preserve">SS</text>
<text transform="translate(750.40,512.92) scale(0.94,1)" text-anchor="end" font-size="8.7" fill="#d4f0ff" xml:space="preserve">6792</text>
<text transform="translate(803.30,512.92) scale(0.94,1)" text-anchor="end" font-size="8.7" fill="#d4f0ff" xml:space="preserve">0.00</text>
<text transform="translate(856.30,512.92) scale(0.94,1)" text-anchor="end" font-size="8.7" fill="#d4f0ff" xml:space="preserve">22°45'30&quot;</text>
<text transform="translate(909.30,512.92) scale(0.94,1)" text-anchor="end" font-size="8.7" fill="#d4f0ff" xml:space="preserve">88°27'34&quot;</text>
<text transform="translate(962.20,512.92) scale(0.94,1)" text-anchor="end" font-size="8.7" fill="#d4f0ff" xml:space="preserve">83.81</text>
<text transform="translate(1015.00,512.92) scale(0.94,1)" text-anchor="end" font-size="8.7" fill="#d4f0ff" xml:space="preserve">SIDEWALK</text>
<text transform="translate(675.65,525.00) scale(0.94,1)" text-anchor="middle" font-size="8.7" fill="#d4f0ff" xml:space="preserve">SS</text>
<text transform="translate(750.40,525.00) scale(0.94,1)" text-anchor="end" font-size="8.7" fill="#d4f0ff" xml:space="preserve">6793</text>
<text transform="translate(803.30,525.00) scale(0.94,1)" text-anchor="end" font-size="8.7" fill="#d4f0ff" xml:space="preserve">0.00</text>
<text transform="translate(856.30,525.00) scale(0.94,1)" text-anchor="end" font-size="8.7" fill="#d4f0ff" xml:space="preserve">21°32'07&quot;</text>
<text transform="translate(909.30,525.00) scale(0.94,1)" text-anchor="end" font-size="8.7" fill="#d4f0ff" xml:space="preserve">88°27'40&quot;</text>
<text transform="translate(962.20,525.00) scale(0.94,1)" text-anchor="end" font-size="8.7" fill="#d4f0ff" xml:space="preserve">84.10</text>
<text transform="translate(1015.00,525.00) scale(0.94,1)" text-anchor="end" font-size="8.7" fill="#d4f0ff" xml:space="preserve">SIDEWALK</text>
<text transform="translate(675.65,537.08) scale(0.94,1)" text-anchor="middle" font-size="8.7" fill="#d4f0ff" xml:space="preserve">SS</text>
<text transform="translate(750.40,537.08) scale(0.94,1)" text-anchor="end" font-size="8.7" fill="#d4f0ff" xml:space="preserve">6794</text>
<text transform="translate(803.30,537.08) scale(0.94,1)" text-anchor="end" font-size="8.7" fill="#d4f0ff" xml:space="preserve">0.00</text>
<text transform="translate(856.30,537.08) scale(0.94,1)" text-anchor="end" font-size="8.7" fill="#d4f0ff" xml:space="preserve">20°25'26&quot;</text>
<text transform="translate(909.30,537.08) scale(0.94,1)" text-anchor="end" font-size="8.7" fill="#d4f0ff" xml:space="preserve">88°29'11&quot;</text>
<text transform="translate(962.20,537.08) scale(0.94,1)" text-anchor="end" font-size="8.7" fill="#d4f0ff" xml:space="preserve">85.51</text>
<text transform="translate(1015.00,537.08) scale(0.94,1)" text-anchor="end" font-size="8.7" fill="#d4f0ff" xml:space="preserve">SIDEWALK</text>
<text transform="translate(675.65,549.16) scale(0.94,1)" text-anchor="middle" font-size="8.7" fill="#d4f0ff" xml:space="preserve">SS</text>
<text transform="translate(750.40,549.16) scale(0.94,1)" text-anchor="end" font-size="8.7" fill="#d4f0ff" xml:space="preserve">6795</text>
<text transform="translate(803.30,549.16) scale(0.94,1)" text-anchor="end" font-size="8.7" fill="#d4f0ff" xml:space="preserve">0.00</text>
<text transform="translate(856.30,549.16) scale(0.94,1)" text-anchor="end" font-size="8.7" fill="#d4f0ff" xml:space="preserve">20°11'39&quot;</text>
<text transform="translate(909.30,549.16) scale(0.94,1)" text-anchor="end" font-size="8.7" fill="#d4f0ff" xml:space="preserve">88°29'10&quot;</text>
<text transform="translate(962.20,549.16) scale(0.94,1)" text-anchor="end" font-size="8.7" fill="#d4f0ff" xml:space="preserve">86.59</text>
<text transform="translate(1015.00,549.16) scale(0.94,1)" text-anchor="end" font-size="8.7" fill="#d4f0ff" xml:space="preserve">SIDEWALK</text>
<text transform="translate(675.65,561.24) scale(0.94,1)" text-anchor="middle" font-size="8.7" fill="#d4f0ff" xml:space="preserve">SS</text>
<text transform="translate(750.40,561.24) scale(0.94,1)" text-anchor="end" font-size="8.7" fill="#d4f0ff" xml:space="preserve">6796</text>
<text transform="translate(803.30,561.24) scale(0.94,1)" text-anchor="end" font-size="8.7" fill="#d4f0ff" xml:space="preserve">0.00</text>
<text transform="translate(856.30,561.24) scale(0.94,1)" text-anchor="end" font-size="8.7" fill="#d4f0ff" xml:space="preserve">19°33'54&quot;</text>
<text transform="translate(909.30,561.24) scale(0.94,1)" text-anchor="end" font-size="8.7" fill="#d4f0ff" xml:space="preserve">88°35'49&quot;</text>
<text transform="translate(962.20,561.24) scale(0.94,1)" text-anchor="end" font-size="8.7" fill="#d4f0ff" xml:space="preserve">110.92</text>
<text transform="translate(1015.00,561.24) scale(0.94,1)" text-anchor="end" font-size="8.7" fill="#d4f0ff" xml:space="preserve">SIDEWALK</text>
<text transform="translate(675.65,573.32) scale(0.94,1)" text-anchor="middle" font-size="8.7" fill="#d4f0ff" xml:space="preserve">SS</text>
<text transform="translate(750.40,573.32) scale(0.94,1)" text-anchor="end" font-size="8.7" fill="#d4f0ff" xml:space="preserve">6797</text>
<text transform="translate(803.30,573.32) scale(0.94,1)" text-anchor="end" font-size="8.7" fill="#d4f0ff" xml:space="preserve">0.00</text>
<text transform="translate(856.30,573.32) scale(0.94,1)" text-anchor="end" font-size="8.7" fill="#d4f0ff" xml:space="preserve">18°30'39&quot;</text>
<text transform="translate(909.30,573.32) scale(0.94,1)" text-anchor="end" font-size="8.7" fill="#d4f0ff" xml:space="preserve">88°38'03&quot;</text>
<text transform="translate(962.20,573.32) scale(0.94,1)" text-anchor="end" font-size="8.7" fill="#d4f0ff" xml:space="preserve">130.67</text>
<text transform="translate(1015.00,573.32) scale(0.94,1)" text-anchor="end" font-size="8.7" fill="#d4f0ff" xml:space="preserve">SIDEWALK</text>
<text transform="translate(675.65,585.40) scale(0.94,1)" text-anchor="middle" font-size="8.7" fill="#d4f0ff" xml:space="preserve">SS</text>
<text transform="translate(750.40,585.40) scale(0.94,1)" text-anchor="end" font-size="8.7" fill="#d4f0ff" xml:space="preserve">6798</text>
<text transform="translate(803.30,585.40) scale(0.94,1)" text-anchor="end" font-size="8.7" fill="#d4f0ff" xml:space="preserve">0.00</text>
<text transform="translate(856.30,585.40) scale(0.94,1)" text-anchor="end" font-size="8.7" fill="#d4f0ff" xml:space="preserve">15°48'14&quot;</text>
<text transform="translate(909.30,585.40) scale(0.94,1)" text-anchor="end" font-size="8.7" fill="#d4f0ff" xml:space="preserve">88°47'18&quot;</text>
<text transform="translate(962.20,585.40) scale(0.94,1)" text-anchor="end" font-size="8.7" fill="#d4f0ff" xml:space="preserve">168.82</text>
<text transform="translate(1015.00,585.40) scale(0.94,1)" text-anchor="end" font-size="8.7" fill="#d4f0ff" xml:space="preserve">SIDEWALK</text>
<text transform="translate(675.65,597.48) scale(0.94,1)" text-anchor="middle" font-size="8.7" fill="#d4f0ff" xml:space="preserve">SS</text>
<text transform="translate(750.40,597.48) scale(0.94,1)" text-anchor="end" font-size="8.7" fill="#d4f0ff" xml:space="preserve">6799</text>
<text transform="translate(803.30,597.48) scale(0.94,1)" text-anchor="end" font-size="8.7" fill="#d4f0ff" xml:space="preserve">0.00</text>
<text transform="translate(856.30,597.48) scale(0.94,1)" text-anchor="end" font-size="8.7" fill="#d4f0ff" xml:space="preserve">15°02'18&quot;</text>
<text transform="translate(909.30,597.48) scale(0.94,1)" text-anchor="end" font-size="8.7" fill="#d4f0ff" xml:space="preserve">88°59'29&quot;</text>
<text transform="translate(962.20,597.48) scale(0.94,1)" text-anchor="end" font-size="8.7" fill="#d4f0ff" xml:space="preserve">206.16</text>
<text transform="translate(1015.00,597.48) scale(0.94,1)" text-anchor="end" font-size="8.7" fill="#d4f0ff" xml:space="preserve">SIDEWALK</text>
<text transform="translate(675.65,609.56) scale(0.94,1)" text-anchor="middle" font-size="8.7" fill="#d4f0ff" xml:space="preserve">SS</text>
<text transform="translate(750.40,609.56) scale(0.94,1)" text-anchor="end" font-size="8.7" fill="#d4f0ff" xml:space="preserve">6800</text>
<text transform="translate(803.30,609.56) scale(0.94,1)" text-anchor="end" font-size="8.7" fill="#d4f0ff" xml:space="preserve">0.00</text>
<text transform="translate(856.30,609.56) scale(0.94,1)" text-anchor="end" font-size="8.7" fill="#d4f0ff" xml:space="preserve">15°07'48&quot;</text>
<text transform="translate(909.30,609.56) scale(0.94,1)" text-anchor="end" font-size="8.7" fill="#d4f0ff" xml:space="preserve">89°05'56&quot;</text>
<text transform="translate(962.20,609.56) scale(0.94,1)" text-anchor="end" font-size="8.7" fill="#d4f0ff" xml:space="preserve">232.44</text>
<text transform="translate(1015.00,609.56) scale(0.94,1)" text-anchor="end" font-size="8.7" fill="#d4f0ff" xml:space="preserve">SIDEWALK</text>
<text transform="translate(675.65,621.64) scale(0.94,1)" text-anchor="middle" font-size="8.7" fill="#d4f0ff" xml:space="preserve">SS</text>
<text transform="translate(750.40,621.64) scale(0.94,1)" text-anchor="end" font-size="8.7" fill="#d4f0ff" xml:space="preserve">6801</text>
<text transform="translate(803.30,621.64) scale(0.94,1)" text-anchor="end" font-size="8.7" fill="#d4f0ff" xml:space="preserve">0.00</text>
<text transform="translate(856.30,621.64) scale(0.94,1)" text-anchor="end" font-size="8.7" fill="#d4f0ff" xml:space="preserve">14°47'45&quot;</text>
<text transform="translate(909.30,621.64) scale(0.94,1)" text-anchor="end" font-size="8.7" fill="#d4f0ff" xml:space="preserve">89°03'25&quot;</text>
<text transform="translate(962.20,621.64) scale(0.94,1)" text-anchor="end" font-size="8.7" fill="#d4f0ff" xml:space="preserve">250.95</text>
<text transform="translate(1015.00,621.64) scale(0.94,1)" text-anchor="end" font-size="8.7" fill="#d4f0ff" xml:space="preserve">SIDEWALK</text>
<text transform="translate(675.65,633.72) scale(0.94,1)" text-anchor="middle" font-size="8.7" fill="#d4f0ff" xml:space="preserve">SS</text>
<text transform="translate(750.40,633.72) scale(0.94,1)" text-anchor="end" font-size="8.7" fill="#d4f0ff" xml:space="preserve">6802</text>
<text transform="translate(803.30,633.72) scale(0.94,1)" text-anchor="end" font-size="8.7" fill="#d4f0ff" xml:space="preserve">0.00</text>
<text transform="translate(856.30,633.72) scale(0.94,1)" text-anchor="end" font-size="8.7" fill="#d4f0ff" xml:space="preserve">14°16'41&quot;</text>
<text transform="translate(909.30,633.72) scale(0.94,1)" text-anchor="end" font-size="8.7" fill="#d4f0ff" xml:space="preserve">89°02'38&quot;</text>
<text transform="translate(962.20,633.72) scale(0.94,1)" text-anchor="end" font-size="8.7" fill="#d4f0ff" xml:space="preserve">262.57</text>
<text transform="translate(1015.00,633.72) scale(0.94,1)" text-anchor="end" font-size="8.7" fill="#d4f0ff" xml:space="preserve">SIDEWALK</text>
<text transform="translate(675.65,645.80) scale(0.94,1)" text-anchor="middle" font-size="8.7" fill="#d4f0ff" xml:space="preserve">SS</text>
<text transform="translate(750.40,645.80) scale(0.94,1)" text-anchor="end" font-size="8.7" fill="#d4f0ff" xml:space="preserve">6803</text>
<text transform="translate(803.30,645.80) scale(0.94,1)" text-anchor="end" font-size="8.7" fill="#d4f0ff" xml:space="preserve">0.00</text>
<text transform="translate(856.30,645.80) scale(0.94,1)" text-anchor="end" font-size="8.7" fill="#d4f0ff" xml:space="preserve">12°34'00&quot;</text>
<text transform="translate(909.30,645.80) scale(0.94,1)" text-anchor="end" font-size="8.7" fill="#d4f0ff" xml:space="preserve">89°24'05&quot;</text>
<text transform="translate(962.20,645.80) scale(0.94,1)" text-anchor="end" font-size="8.7" fill="#d4f0ff" xml:space="preserve">289.98</text>
<text transform="translate(1015.00,645.80) scale(0.94,1)" text-anchor="end" font-size="8.7" fill="#d4f0ff" xml:space="preserve">SIDEWALK</text>
<text transform="translate(675.65,657.88) scale(0.94,1)" text-anchor="middle" font-size="8.7" fill="#1a1a1a" xml:space="preserve">SS</text>
<text transform="translate(750.40,657.88) scale(0.94,1)" text-anchor="end" font-size="8.7" fill="#1a1a1a" xml:space="preserve">6804</text>
<text transform="translate(803.30,657.88) scale(0.94,1)" text-anchor="end" font-size="8.7" fill="#1a1a1a" xml:space="preserve">0.00</text>
<text transform="translate(856.30,657.88) scale(0.94,1)" text-anchor="end" font-size="8.7" fill="#1a1a1a" xml:space="preserve">11°16'07&quot;</text>
<text transform="translate(909.30,657.88) scale(0.94,1)" text-anchor="end" font-size="8.7" fill="#1a1a1a" xml:space="preserve">89°05'51&quot;</text>
<text transform="translate(962.20,657.88) scale(0.94,1)" text-anchor="end" font-size="8.7" fill="#1a1a1a" xml:space="preserve">285.64</text>
<text transform="translate(1015.00,657.88) scale(0.94,1)" text-anchor="end" font-size="8.7" fill="#1a1a1a" xml:space="preserve">COLUMN</text>
<text transform="translate(675.65,669.96) scale(0.94,1)" text-anchor="middle" font-size="8.7" fill="#1a1a1a" xml:space="preserve">SS</text>
<text transform="translate(750.40,669.96) scale(0.94,1)" text-anchor="end" font-size="8.7" fill="#1a1a1a" xml:space="preserve">6805</text>
<text transform="translate(803.30,669.96) scale(0.94,1)" text-anchor="end" font-size="8.7" fill="#1a1a1a" xml:space="preserve">0.00</text>
<text transform="translate(856.30,669.96) scale(0.94,1)" text-anchor="end" font-size="8.7" fill="#1a1a1a" xml:space="preserve">10°49'22&quot;</text>
<text transform="translate(909.30,669.96) scale(0.94,1)" text-anchor="end" font-size="8.7" fill="#1a1a1a" xml:space="preserve">89°06'34&quot;</text>
<text transform="translate(962.20,669.96) scale(0.94,1)" text-anchor="end" font-size="8.7" fill="#1a1a1a" xml:space="preserve">284.12</text>
<text transform="translate(1015.00,669.96) scale(0.94,1)" text-anchor="end" font-size="8.7" fill="#1a1a1a" xml:space="preserve">COLUMN</text>
<path d="M636.8,276.12 L641.3,279.92 L636.8,283.72z" fill="#000"/>
</svg>
</body></html>
